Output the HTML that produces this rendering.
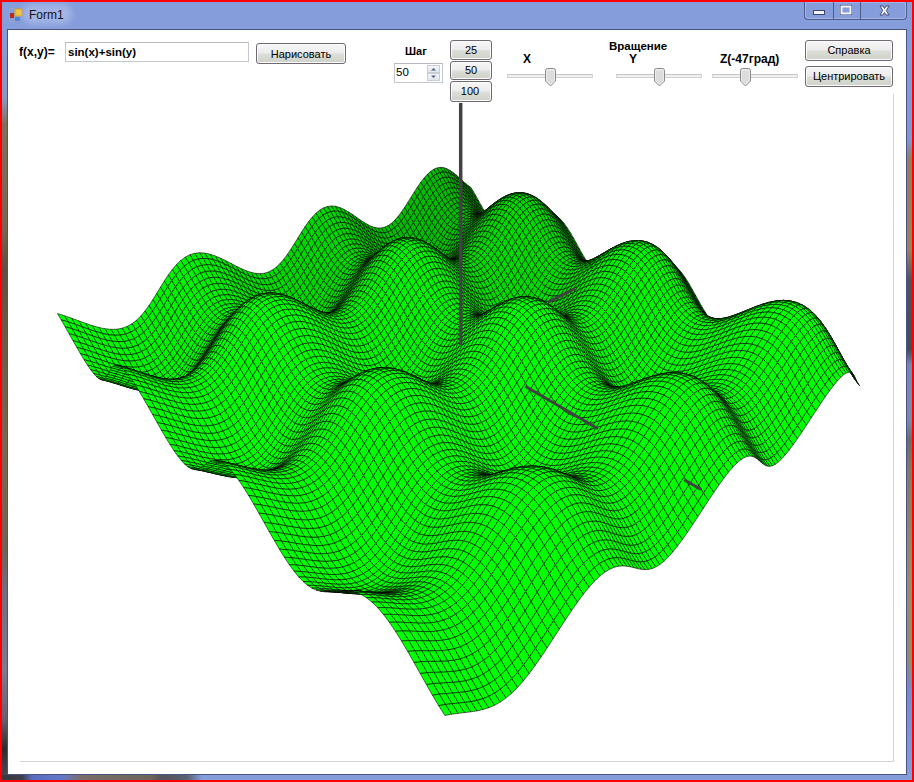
<!DOCTYPE html>
<html><head><meta charset="utf-8">
<style>
*{box-sizing:border-box}
html,body{margin:0;padding:0;width:914px;height:782px;overflow:hidden;background:#ff0000}
body{position:relative;font-family:"Liberation Sans",sans-serif}
.a{position:absolute}
#frame{left:2px;top:2px;width:910px;height:778px;background:#869ddb}
#client{left:8px;top:30px;width:898px;height:744px;background:#fff}
.t{position:absolute;white-space:pre;color:#000;line-height:12px}
.b{font-weight:bold;font-size:11px}
.n{font-size:11px}
.btn{position:absolute;border:1px solid #6f6872;border-radius:3px;background:linear-gradient(#f6f6f6 0%,#ececec 48%,#dcded8 52%,#ced1ca 100%);box-shadow:inset 0 0 0 1px #fcfcfc;font-size:11px;text-align:center;color:#000}
.track{position:absolute;height:4px;border:1px solid #d2d2d2;border-top-color:#c4c4c4;background:#f0f0f0;border-radius:1px}
.thumb{position:absolute;width:11px;height:19px}
</style></head><body>
<div id="frame" class="a"></div>
<div class="a" style="left:2px;top:29px;width:5px;height:751px;background:linear-gradient(180deg,#869ddb 0px,#8a96c0 70px,#80705a 95px,#786650 200px,#5e5040 240px,#6a5a45 300px,#7a6850 420px,#706456 520px,#746c80 560px,#807890 640px,#6a6070 690px,#2e2a30 720px,#4a4452 745px,#3c3a44 751px)"></div>
<div class="a" style="left:907px;top:20px;width:5px;height:760px;background:linear-gradient(180deg,#869ddb 0px,#8496d0 120px,#9a7a58 140px,#a08058 230px,#585058 260px,#4c4a52 330px,#7a86b0 345px,#8088a8 400px,#706a66 420px,#8a7660 450px,#a08a64 560px,#9c8866 640px,#7a88c8 670px,#869ddb 760px)"></div>
<div class="a" style="left:2px;top:775px;width:910px;height:5px;background:linear-gradient(90deg,#3a3840 0px,#3e3e4a 20px,#5a6cc0 30px,#6478c8 60px,#7a6e66 80px,#6e6458 150px,#54525a 160px,#5c6070 185px,#869ddb 200px,#869ddb 910px)"></div>
<!-- title -->
<svg class="a" style="left:9px;top:8px" width="14" height="14" viewBox="0 0 14 14">
<rect x="0.5" y="0.5" width="5" height="5" fill="none" stroke="#c8b8a0" stroke-width="0.6" stroke-dasharray="1 1"/>
<rect x="0.5" y="8.5" width="5" height="5" fill="none" stroke="#c8b8a0" stroke-width="0.6" stroke-dasharray="1 1"/>
<rect x="1" y="5" width="4" height="5" fill="#b52a1c"/>
<rect x="6" y="1" width="7" height="7" fill="#f2c33a" stroke="#d59a1a" stroke-width="0.8"/>
<rect x="6" y="9" width="5" height="4" fill="#4a86d8"/>
</svg>
<div class="a" style="left:22px;top:4px;width:50px;height:20px;border-radius:10px;background:rgba(200,210,245,.45);filter:blur(3px)"></div>
<div class="t" style="left:29px;top:9px;font-size:12px;line-height:12px;color:#111">Form1</div>
<!-- control box -->
<div class="a" style="left:804px;top:2px;width:103px;height:18px;border:1px solid #4e5a8a;border-top:none;border-radius:0 0 4px 4px;box-shadow:inset 0 0 0 1px rgba(255,255,255,.25)"></div>
<div class="a" style="left:833px;top:2px;width:1px;height:17px;background:#4e5a8a"></div>
<div class="a" style="left:860px;top:2px;width:1px;height:17px;background:#4e5a8a"></div>
<svg class="a" style="left:804px;top:2px" width="103" height="18">
<rect x="9.5" y="8.5" width="11" height="4" fill="#f4f4f4" stroke="#3c4470" stroke-width="1"/>
<rect x="36.5" y="3.5" width="11" height="9" fill="none" stroke="#3c4470" stroke-width="1"/>
<rect x="37.5" y="4.5" width="9" height="7" fill="none" stroke="#f4f4f4" stroke-width="2"/>
<path d="M76 4 L79 4 L80.5 6.5 L82 4 L85 4 L82.3 8.5 L85 13 L82 13 L80.5 10.5 L79 13 L76 13 L78.7 8.5 Z" fill="#f4f4f4" stroke="#3c4470" stroke-width="0.9"/>
</svg>
<div id="client" class="a" style="border:1px solid rgba(20,25,60,.55);background-clip:padding-box;left:7px;top:29px;width:900px;height:746px"></div>

<!-- controls -->
<div class="t b" style="left:19px;top:46px;font-size:12px">f(x,y)=</div>
<div class="a" style="left:65px;top:42px;width:184px;height:20px;border:1px solid #c3c7cf;border-top-color:#b5b9c2;background:#fff"></div>
<div class="t b" style="left:68px;top:46px;font-size:11.5px">sin(x)+sin(y)</div>
<div class="btn" style="left:256px;top:43px;width:90px;height:21px;line-height:20px;padding-left:0">Нарисовать</div>

<div class="t b" style="left:405px;top:45px">Шаг</div>
<div class="a" style="left:394px;top:63px;width:49px;height:20px;border:1px solid #c3c7cf;border-top-color:#b5b9c2;background:#fff"></div>
<div class="t n" style="left:396px;top:66px;font-size:11.5px">50</div>
<div class="a" style="left:427px;top:65px;width:13px;height:8px;border:1px solid #c9ced6;background:linear-gradient(#f4f6f9,#e1e5eb)"></div>
<div class="a" style="left:427px;top:73px;width:13px;height:8px;border:1px solid #c9ced6;background:linear-gradient(#f4f6f9,#e1e5eb)"></div>
<svg class="a" style="left:427px;top:65px" width="13" height="16"><path d="M4 5.5 L6.5 3 L9 5.5Z" fill="#4d6185"/><path d="M4 10.5 L6.5 13 L9 10.5Z" fill="#4d6185"/></svg>

<div class="btn" style="left:450px;top:40px;width:42px;height:20px;line-height:18px">25</div>
<div class="btn" style="left:450px;top:61px;width:42px;height:19px;line-height:17px">50</div>
<div class="btn" style="left:450px;top:81px;width:42px;height:21px;line-height:19px;text-indent:-2px">100</div>

<div class="t b" style="left:523px;top:53px;font-size:12px">X</div>
<div class="track" style="left:507px;top:74px;width:86px"></div>
<svg class="thumb" style="left:545px;top:68px" viewBox="0 0 11 19"><path d="M0.5 2.5 Q0.5 0.5 2.5 0.5 L8.5 0.5 Q10.5 0.5 10.5 2.5 L10.5 13 L5.5 18 L0.5 13 Z" fill="#ececec" stroke="#8a8a8a"/><path d="M2 2.5 L9 2.5 L9 12.5 L5.5 16 L2 12.5Z" fill="#dcdcdc"/></svg>

<div class="t b" style="left:609px;top:40px;font-size:11.5px">Вращение</div>
<div class="t b" style="left:629px;top:53px;font-size:12px">Y</div>
<div class="track" style="left:616px;top:74px;width:86px"></div>
<svg class="thumb" style="left:654px;top:68px" viewBox="0 0 11 19"><path d="M0.5 2.5 Q0.5 0.5 2.5 0.5 L8.5 0.5 Q10.5 0.5 10.5 2.5 L10.5 13 L5.5 18 L0.5 13 Z" fill="#ececec" stroke="#8a8a8a"/><path d="M2 2.5 L9 2.5 L9 12.5 L5.5 16 L2 12.5Z" fill="#dcdcdc"/></svg>

<div class="t b" style="left:720px;top:53px;font-size:12px">Z(-47град)</div>
<div class="track" style="left:712px;top:74px;width:86px"></div>
<svg class="thumb" style="left:740px;top:68px" viewBox="0 0 11 19"><path d="M0.5 2.5 Q0.5 0.5 2.5 0.5 L8.5 0.5 Q10.5 0.5 10.5 2.5 L10.5 13 L5.5 18 L0.5 13 Z" fill="#ececec" stroke="#8a8a8a"/><path d="M2 2.5 L9 2.5 L9 12.5 L5.5 16 L2 12.5Z" fill="#dcdcdc"/></svg>

<div class="btn" style="left:805px;top:40px;width:88px;height:21px;line-height:19px">Справка</div>
<div class="btn" style="left:805px;top:66px;width:88px;height:21px;line-height:19px">Центрировать</div>

<!-- picture box borders -->
<div class="a" style="left:893px;top:94px;width:1px;height:668px;background:#d0d5d0"></div>
<div class="a" style="left:20px;top:761px;width:874px;height:1px;background:#d0d5d0"></div>

<svg id="fb" class="a" style="left:0;top:0" width="914" height="782"><defs><linearGradient id="gg" gradientUnits="userSpaceOnUse" x1="0" y1="168" x2="0" y2="715"><stop offset="0" stop-color="#00b400"/><stop offset="0.2" stop-color="#00d200"/><stop offset="0.35" stop-color="#00f000"/><stop offset="0.45" stop-color="#00ff00"/><stop offset="1" stop-color="#00ff00"/></linearGradient></defs><polygon points="57.5,313.3 58.5,313.7 59.5,314 60.5,314.3 61.5,314.7 62.5,315 63.5,315.3 64.5,315.7 65.5,316 66.5,316.3 67.5,316.7 68.5,317 69.5,317.3 70.5,317.7 71.5,318 72.5,318.3 73.5,319 74.5,319.3 75.5,319.7 76.5,320 77.5,320.3 78.5,320.7 79.5,321 80.5,321.3 81.5,321.7 82.5,322 83.5,322.3 84.5,322.7 85.5,323 86.5,323.3 87.5,323.7 88.5,324 89.5,324.7 90.5,325 91.5,325.3 92.5,325.7 93.5,326 94.5,326 95.5,326.3 96.5,326.7 97.5,327 98.5,327.3 99.5,327.7 100.5,328 101.5,328 102.5,328.3 103.5,328.7 104.5,328.7 105.5,329 106.5,329 107.5,329 108.5,329.3 109.5,329.3 110.5,329.3 111.5,329.3 112.5,329.3 113.5,329.3 114.5,329.3 115.5,329.3 116.5,329 117.5,329 118.5,328.7 119.5,328.7 120.5,328.3 121.5,328.3 122.5,328 123.5,327.7 124.5,327.3 125.5,327 126.5,326.7 127.5,326.3 128.5,325.7 129.5,325 130.5,324.7 131.5,324 132.5,323.3 133.5,322.3 134.5,321.7 135.5,320.7 136.5,320 137.5,319 138.5,318 139.5,317 140.5,316 141.5,315 142.5,313.7 143.5,312.7 144.5,311.3 145.5,310.3 146.5,309 147.5,307.7 148.5,306.3 149.5,304.7 150.5,303 151.5,301.3 152.5,299.7 153.5,298.3 154.5,296.7 155.5,295 156.5,293.3 157.5,291.7 158.5,290 159.5,288.3 160.5,286.7 161.5,285 162.5,283.7 163.5,282 164.5,280.7 165.5,279 166.5,277.7 167.5,276 168.5,274.7 169.5,273.3 170.5,272 171.5,270.7 172.5,269.3 173.5,268 174.5,266.7 175.5,265.7 176.5,264.3 177.5,263.3 178.5,262.7 179.5,261.7 180.5,260.7 181.5,260 182.5,259 183.5,258.3 184.5,257.7 185.5,257 186.5,256.3 187.5,256 188.5,255.3 189.5,255 190.5,254.7 191.5,254.3 192.5,254 193.5,253.7 194.5,253.3 195.5,253 196.5,253 197.5,253 198.5,253 199.5,252.7 200.5,253 201.5,253 202.5,253 203.5,253 204.5,253 205.5,253.3 206.5,253.3 207.5,253.7 208.5,254 209.5,254 210.5,254.3 211.5,254.7 212.5,255 213.5,255.3 214.5,255.7 215.5,256 216.5,256.3 217.5,256.7 218.5,257.3 219.5,257.7 220.5,258 221.5,258.7 222.5,259 223.5,259.3 224.5,260 225.5,260.3 226.5,261 227.5,261.7 228.5,262 229.5,262.7 230.5,263.3 231.5,263.7 232.5,264.3 233.5,264.7 234.5,265.3 235.5,265.7 236.5,266.3 237.5,266.7 238.5,267.3 239.5,267.7 240.5,268 241.5,268.7 242.5,269 243.5,269.7 244.5,270 245.5,270.3 246.5,271 247.5,271.3 248.5,271.3 249.5,271.7 250.5,272 251.5,272.3 252.5,272.7 253.5,273 254.5,273.3 255.5,273.3 256.5,273.7 257.5,273.7 258.5,273.7 259.5,273.7 260.5,273.7 261.5,273.7 262.5,273.3 263.5,273.3 264.5,273 265.5,272.7 266.5,272.3 267.5,272 268.5,271.7 269.5,271.3 270.5,270.7 271.5,270.3 272.5,269.7 273.5,269 274.5,268.3 275.5,267.3 276.5,266.7 277.5,265.7 278.5,265 279.5,264 280.5,263 281.5,261.7 282.5,260.7 283.5,259.3 284.5,258 285.5,256.7 286.5,255.3 287.5,254 288.5,252.3 289.5,251 290.5,249.7 291.5,248 292.5,246.3 293.5,245 294.5,243.3 295.5,241.7 296.5,240 297.5,238.7 298.5,237 299.5,235.3 300.5,233.7 301.5,232 302.5,230.3 303.5,228.7 304.5,227.3 305.5,225.7 306.5,224.3 307.5,222.7 308.5,221.3 309.5,220 310.5,219 311.5,217.7 312.5,216.7 313.5,215.7 314.5,214.3 315.5,213.3 316.5,212.7 317.5,211.7 318.5,211 319.5,210.3 320.5,209.7 321.5,209 322.5,208.3 323.5,207.7 324.5,207.3 325.5,207 326.5,206.7 327.5,206.3 328.5,206.3 329.5,206 330.5,206 331.5,205.7 332.5,206 333.5,206 334.5,206 335.5,206 336.5,206.3 337.5,206.7 338.5,207 339.5,207 340.5,207.7 341.5,208 342.5,208.7 343.5,209 344.5,209.7 345.5,210 346.5,210.7 347.5,211 348.5,211.7 349.5,212.3 350.5,213 351.5,213.7 352.5,214.3 353.5,215.3 354.5,216 355.5,216.7 356.5,217.3 357.5,218 358.5,218.7 359.5,219.3 360.5,220 361.5,220.7 362.5,221.3 363.5,222 364.5,222.7 365.5,223.3 366.5,224 367.5,224.3 368.5,225 369.5,225.3 370.5,225.7 371.5,226 372.5,226.7 373.5,227 374.5,227.3 375.5,227.3 376.5,227.7 377.5,227.7 378.5,227.7 379.5,227.7 380.5,227.7 381.5,227.7 382.5,227.7 383.5,227.3 384.5,227.3 385.5,226.7 386.5,226.3 387.5,225.7 388.5,225 389.5,224.3 390.5,223.7 391.5,223 392.5,222 393.5,221.3 394.5,220.3 395.5,219.3 396.5,218 397.5,217 398.5,216 399.5,214.7 400.5,213.3 401.5,212 402.5,210.3 403.5,208.7 404.5,207.3 405.5,205.7 406.5,204 407.5,202.3 408.5,201 409.5,199.3 410.5,198 411.5,196.3 412.5,194.7 413.5,192.7 414.5,191 415.5,189.7 416.5,188 417.5,186.7 418.5,185.3 419.5,183.7 420.5,182.3 421.5,181.3 422.5,180 423.5,178.7 424.5,177.7 425.5,176.3 426.5,175 427.5,174 428.5,173 429.5,172.3 430.5,171.3 431.5,170.7 432.5,170 433.5,169.3 434.5,168.7 435.5,168.3 436.5,168 437.5,167.7 438.5,167.7 439.5,167.7 440.5,167.3 441.5,167.3 442.5,167.3 443.5,167.3 444.5,167.7 445.5,168 446.5,168.3 447.5,169 448.5,169.3 449.5,170 450.5,170.7 451.5,171.3 452.5,172 453.5,172.7 454.5,173.7 455.5,174.3 456.5,175.3 457.5,176.3 458.5,177 459.5,178 460.5,179 461.5,179.7 462.5,180.7 463.5,181.7 464.5,182.3 465.5,183.3 466.5,184 467.5,184.7 468.5,185.7 469.5,186.3 470.5,187 471.5,188 472.5,189.7 473.5,191.7 474.5,193.3 475.5,195 476.5,196.7 477.5,198.3 478.5,200 479.5,201.7 480.5,203.7 481.5,205.7 482.5,207.3 483.5,209 484.5,211 485.5,210 486.5,209.3 487.5,208.7 488.5,207.7 489.5,207 490.5,206 491.5,205.3 492.5,204.3 493.5,203.7 494.5,203 495.5,202 496.5,201.3 497.5,200.7 498.5,200 499.5,199.3 500.5,198.7 501.5,198 502.5,197.7 503.5,197 504.5,196.7 505.5,196 506.5,195.7 507.5,195.3 508.5,194.7 509.5,194.3 510.5,194 511.5,193.7 512.5,193.3 513.5,193.3 514.5,193 515.5,192.7 516.5,192.7 517.5,192.7 518.5,192.3 519.5,192.3 520.5,192.3 521.5,192.7 522.5,192.7 523.5,192.7 524.5,193 525.5,193 526.5,193.3 527.5,193.7 528.5,194 529.5,194 530.5,194.7 531.5,195.3 532.5,195.7 533.5,196.3 534.5,196.7 535.5,197 536.5,197.7 537.5,198.3 538.5,199 539.5,200 540.5,200.7 541.5,201.3 542.5,202.3 543.5,203 544.5,204 545.5,205 546.5,206 547.5,207 548.5,208 549.5,209 550.5,210 551.5,211 552.5,212 553.5,213 554.5,214 555.5,215 556.5,215.7 557.5,216.7 558.5,217.3 559.5,218.3 560.5,219 561.5,220 562.5,221.3 563.5,222.3 564.5,223.7 565.5,225 566.5,226.3 567.5,227.7 568.5,229.3 569.5,231 570.5,232.3 571.5,234 572.5,236 573.5,237.7 574.5,239.3 575.5,241.3 576.5,243.3 577.5,245 578.5,247 579.5,248.7 580.5,250.3 581.5,252.3 582.5,254 583.5,255.7 584.5,257.3 585.5,259 586.5,260.7 587.5,260.7 588.5,260.7 589.5,260.3 590.5,260 591.5,259.3 592.5,259 593.5,258.7 594.5,258 595.5,257.7 596.5,257 597.5,256.3 598.5,256 599.5,255.3 600.5,255 601.5,254.3 602.5,253.7 603.5,253 604.5,252.3 605.5,251.7 606.5,251 607.5,250.3 608.5,250 609.5,249.3 610.5,249 611.5,248.3 612.5,248 613.5,247.3 614.5,246.7 615.5,246 616.5,245.7 617.5,245.3 618.5,244.7 619.5,244.3 620.5,243.7 621.5,243.7 622.5,243.3 623.5,243 624.5,242.7 625.5,242.3 626.5,242 627.5,242 628.5,241.3 629.5,241.3 630.5,241 631.5,241 632.5,240.3 633.5,240.3 634.5,240.3 635.5,240.3 636.5,240.3 637.5,240.3 638.5,240.3 639.5,240.3 640.5,240.3 641.5,240.3 642.5,241 643.5,241 644.5,241.3 645.5,241.3 646.5,241.7 647.5,242 648.5,242.3 649.5,243 650.5,243.3 651.5,243.7 652.5,244.3 653.5,245 654.5,245.7 655.5,246.3 656.5,247 657.5,247.7 658.5,248.3 659.5,249 660.5,249.7 661.5,250.3 662.5,251.3 663.5,252.3 664.5,253.3 665.5,254.3 666.5,255.7 667.5,256.7 668.5,257.7 669.5,258.7 670.5,260 671.5,261 672.5,262.3 673.5,263.7 674.5,264.7 675.5,266 676.5,267 677.5,268 678.5,269 679.5,270 680.5,271.3 681.5,272.7 682.5,273.7 683.5,275 684.5,276.3 685.5,277.7 686.5,279.3 687.5,281 688.5,282.7 689.5,284.3 690.5,286 691.5,288 692.5,289.7 693.5,291.3 694.5,293 695.5,295 696.5,296.7 697.5,298.7 698.5,300.7 699.5,302.3 700.5,304 701.5,305.7 702.5,307 703.5,308.7 704.5,310.3 705.5,312 706.5,313.7 707.5,315.3 708.5,316.3 709.5,316.7 710.5,317.3 711.5,317.7 712.5,318 713.5,318 714.5,318.3 715.5,318.7 716.5,318.7 717.5,318.7 718.5,318.7 719.5,318.7 720.5,318.3 721.5,318.3 722.5,318.3 723.5,318 724.5,318 725.5,317.7 726.5,317.3 727.5,317.3 728.5,317 729.5,316.7 730.5,316.3 731.5,316 732.5,315.7 733.5,315.3 734.5,315 735.5,314.7 736.5,314.3 737.5,314 738.5,313.7 739.5,313 740.5,312.7 741.5,312.3 742.5,311.7 743.5,311.3 744.5,311 745.5,310.7 746.5,310.3 747.5,310 748.5,309.3 749.5,309 750.5,308.7 751.5,308.3 752.5,308 753.5,307.3 754.5,307 755.5,306.3 756.5,306.3 757.5,306 758.5,305.7 759.5,305 760.5,304.7 761.5,304.3 762.5,304 763.5,304 764.5,303.7 765.5,303.3 766.5,303 767.5,302.7 768.5,302.3 769.5,302.3 770.5,301.7 771.5,301.7 772.5,301.7 773.5,301.3 774.5,301 775.5,301 776.5,300.7 777.5,300.7 778.5,300.7 779.5,300.7 780.5,300.7 781.5,300.3 782.5,300.3 783.5,300 784.5,300 785.5,300.3 786.5,300.3 787.5,300.7 788.5,300.7 789.5,300.7 790.5,300.7 791.5,301 792.5,301.3 793.5,301.7 794.5,302 795.5,302 796.5,302.3 797.5,302.7 798.5,303.3 799.5,303.7 800.5,304 801.5,304.7 802.5,305 803.5,305.7 804.5,306.3 805.5,307 806.5,307.7 807.5,308.3 808.5,309 809.5,309.7 810.5,310.3 811.5,311.3 812.5,312.3 813.5,313 814.5,314 815.5,315 816.5,316.3 817.5,317.3 818.5,318.7 819.5,319.7 820.5,321 821.5,322.3 822.5,323.7 823.5,325 824.5,326.3 825.5,327.7 826.5,329.3 827.5,331 828.5,332.7 829.5,334.3 830.5,336 831.5,337.7 832.5,339.3 833.5,341 834.5,343 835.5,344.7 836.5,346.3 837.5,348 838.5,350 839.5,351.7 840.5,353.7 841.5,355.3 842.5,357.3 843.5,359 844.5,360.7 845.5,362.7 846.5,364.3 847.5,365.7 848.5,367.3 849.5,368.7 850.5,370 851.5,371.7 852.5,373 853.5,374.3 854.5,376.3 855.5,378.3 856.5,380.3 857.5,382.3 858.5,384 859.5,385.3 859.5,386 858.5,384.7 857.5,383.3 856.5,381.7 855.5,380.3 854.5,379 853.5,377.7 852.5,376 851.5,374.3 850.5,372.7 849.5,372.3 848.5,372.3 847.5,372.7 846.5,373 845.5,373.7 844.5,374.3 843.5,375 842.5,376 841.5,376.7 840.5,377.7 839.5,378.7 838.5,380 837.5,381 836.5,382 835.5,383.3 834.5,384.7 833.5,385.7 832.5,387 831.5,388.3 830.5,389.7 829.5,391 828.5,392.7 827.5,394 826.5,395.3 825.5,397 824.5,398.3 823.5,399.7 822.5,401.3 821.5,402.7 820.5,404 819.5,405.7 818.5,407 817.5,408.7 816.5,410.3 815.5,411.7 814.5,413.3 813.5,414.7 812.5,416 811.5,417.7 810.5,419 809.5,420.7 808.5,422 807.5,423.7 806.5,425 805.5,426.7 804.5,428 803.5,429.7 802.5,431 801.5,432.7 800.5,434 799.5,435.7 798.5,437.3 797.5,438.7 796.5,440.3 795.5,441.7 794.5,443 793.5,444.7 792.5,446 791.5,447.3 790.5,448.7 789.5,450 788.5,451.3 787.5,452.3 786.5,453.7 785.5,455 784.5,456 783.5,457 782.5,458 781.5,459 780.5,460 779.5,461 778.5,462 777.5,462.7 776.5,463.3 775.5,464 774.5,464.7 773.5,465.3 772.5,466 771.5,466 770.5,466 769.5,466.3 768.5,466.3 767.5,466.3 766.5,466 765.5,465.7 764.5,465 763.5,464.3 762.5,463.7 761.5,462.7 760.5,461.7 759.5,461 758.5,460 757.5,459.3 756.5,458.7 755.5,458 754.5,457.3 753.5,457 752.5,456.3 751.5,456.3 750.5,456.3 749.5,456.3 748.5,456.3 747.5,456.7 746.5,457 745.5,457.3 744.5,457.7 743.5,458 742.5,458.7 741.5,459.3 740.5,460 739.5,461 738.5,461.7 737.5,462.7 736.5,463.7 735.5,464.7 734.5,465.3 733.5,466.3 732.5,467.3 731.5,468.7 730.5,470 729.5,471 728.5,472.3 727.5,473.7 726.5,475 725.5,476.3 724.5,477.7 723.5,479 722.5,480.3 721.5,481.7 720.5,483 719.5,484.3 718.5,486 717.5,487.3 716.5,488.7 715.5,490.3 714.5,491.7 713.5,493.3 712.5,494.7 711.5,496 710.5,497.7 709.5,499 708.5,500.3 707.5,502 706.5,503.7 705.5,505 704.5,506.7 703.5,508.3 702.5,509.7 701.5,511.3 700.5,512.7 699.5,514.3 698.5,515.7 697.5,517.3 696.5,519 695.5,520.3 694.5,522 693.5,523.7 692.5,525.3 691.5,526.7 690.5,528 689.5,529.7 688.5,531 687.5,532.3 686.5,534 685.5,535.3 684.5,536.7 683.5,538.3 682.5,539.7 681.5,541 680.5,542.3 679.5,543.7 678.5,545 677.5,546.3 676.5,547.7 675.5,548.7 674.5,550 673.5,551.3 672.5,552.3 671.5,553.7 670.5,554.7 669.5,555.7 668.5,557 667.5,558 666.5,559 665.5,559.7 664.5,560.7 663.5,561.7 662.5,562.3 661.5,563.3 660.5,564 659.5,564.7 658.5,565.3 657.5,566 656.5,566.7 655.5,567 654.5,567.7 653.5,568 652.5,568.3 651.5,568.7 650.5,569 649.5,569.3 648.5,569.7 647.5,569.7 646.5,569.7 645.5,569.7 644.5,569.3 643.5,569.3 642.5,569.3 641.5,569.3 640.5,569 639.5,569 638.5,568.7 637.5,568.3 636.5,568.3 635.5,568 634.5,568 633.5,567.7 632.5,567.3 631.5,567 630.5,567 629.5,566.7 628.5,566.3 627.5,566.3 626.5,566 625.5,566 624.5,566 623.5,566 622.5,566 621.5,566 620.5,566 619.5,566 618.5,566.3 617.5,566.7 616.5,566.7 615.5,567 614.5,567.3 613.5,567.7 612.5,568 611.5,568.7 610.5,569 609.5,569.3 608.5,570 607.5,570.7 606.5,571.3 605.5,572 604.5,572.7 603.5,573.3 602.5,574 601.5,575 600.5,575.7 599.5,576.7 598.5,577.7 597.5,578.7 596.5,579.3 595.5,580.3 594.5,581.3 593.5,582.3 592.5,583.7 591.5,584.7 590.5,586 589.5,587 588.5,588 587.5,589.3 586.5,590.3 585.5,591.7 584.5,592.7 583.5,594 582.5,595.3 581.5,596.7 580.5,598 579.5,599.7 578.5,601 577.5,602.3 576.5,604 575.5,605.3 574.5,606.7 573.5,608.3 572.5,609.7 571.5,611 570.5,612.7 569.5,614 568.5,615.7 567.5,617 566.5,618.7 565.5,620 564.5,621.7 563.5,623 562.5,624.3 561.5,626 560.5,627.3 559.5,629 558.5,630.3 557.5,632 556.5,633.7 555.5,635 554.5,636.7 553.5,638.3 552.5,639.7 551.5,641.3 550.5,643 549.5,644.3 548.5,646 547.5,647.7 546.5,649 545.5,650.7 544.5,652 543.5,653.7 542.5,655 541.5,656.7 540.5,658 539.5,659.3 538.5,661 537.5,662.3 536.5,663.7 535.5,665.3 534.5,666.7 533.5,668 532.5,669.3 531.5,670.7 530.5,672 529.5,673.3 528.5,674.7 527.5,675.7 526.5,677 525.5,678.3 524.5,679.3 523.5,680.7 522.5,681.7 521.5,683 520.5,684 519.5,685.3 518.5,686.7 517.5,687.7 516.5,688.7 515.5,689.7 514.5,690.7 513.5,691.7 512.5,692.7 511.5,693.7 510.5,694.3 509.5,695.3 508.5,696 507.5,697 506.5,697.7 505.5,698.7 504.5,699.3 503.5,700 502.5,700.7 501.5,701.3 500.5,702 499.5,702.7 498.5,703 497.5,703.7 496.5,704.3 495.5,704.7 494.5,705.3 493.5,705.7 492.5,706 491.5,706.7 490.5,707 489.5,707.3 488.5,708 487.5,708.3 486.5,708.3 485.5,708.7 484.5,709 483.5,709.3 482.5,709.7 481.5,709.7 480.5,710 479.5,710.3 478.5,710.3 477.5,710.7 476.5,711 475.5,711 474.5,711.3 473.5,711.3 472.5,711.7 471.5,711.7 470.5,712 469.5,712 468.5,712 467.5,712.3 466.5,712.3 465.5,712.3 464.5,712.7 463.5,712.7 462.5,712.7 461.5,712.7 460.5,713 459.5,713 458.5,713 457.5,713.3 456.5,713.3 455.5,713.7 454.5,713.7 453.5,714 452.5,714 451.5,714.3 450.5,714.3 449.5,714.7 448.5,714.7 447.5,715 446.5,715.3 445.5,715.3 444.5,715.3 443.5,713.7 442.5,712 441.5,710.3 440.5,709 439.5,707.3 438.5,705.7 437.5,704 436.5,702.3 435.5,700.7 434.5,699 433.5,697.3 432.5,695.3 431.5,693.7 430.5,692 429.5,690.3 428.5,688.7 427.5,687 426.5,685.3 425.5,683.7 424.5,681.7 423.5,679.7 422.5,678 421.5,676 420.5,674 419.5,672.3 418.5,670.7 417.5,668.7 416.5,667 415.5,665.3 414.5,663.7 413.5,662 412.5,660 411.5,658.3 410.5,656.7 409.5,654.7 408.5,653 407.5,651.3 406.5,649.7 405.5,648 404.5,646 403.5,644.3 402.5,642.7 401.5,641 400.5,639.3 399.5,638 398.5,636.3 397.5,634.7 396.5,633 395.5,631.3 394.5,630 393.5,628.3 392.5,627 391.5,625.3 390.5,624 389.5,622.3 388.5,621 387.5,619.7 386.5,618.7 385.5,617.3 384.5,616 383.5,614.7 382.5,613.7 381.5,612.3 380.5,611.3 379.5,610 378.5,609 377.5,607.7 376.5,606.7 375.5,605.7 374.5,604.7 373.5,603.7 372.5,602.7 371.5,601.7 370.5,601 369.5,600 368.5,599.3 367.5,598.3 366.5,597.7 365.5,597 364.5,596.3 363.5,596 362.5,595.3 361.5,594.7 360.5,594.3 359.5,594.3 358.5,594.3 357.5,594.3 356.5,594 355.5,594 354.5,593.7 353.5,593.7 352.5,593.7 351.5,593.7 350.5,593.7 349.5,593.7 348.5,593.7 347.5,593.3 346.5,593.3 345.5,593.3 344.5,593.3 343.5,593 342.5,593 341.5,592.7 340.5,592.7 339.5,592.7 338.5,592.7 337.5,592.7 336.5,592.3 335.5,592.3 334.5,592 333.5,592 332.5,592 331.5,592 330.5,592 329.5,591.7 328.5,591.7 327.5,591.7 326.5,591.7 325.5,591.7 324.5,591.7 323.5,591.3 322.5,591.3 321.5,591.3 320.5,591.3 319.5,591 318.5,590.7 317.5,590.7 316.5,590.3 315.5,590 314.5,589.7 313.5,589 312.5,588.7 311.5,588 310.5,587.3 309.5,586.7 308.5,586 307.5,585.3 306.5,584.3 305.5,583.7 304.5,582.7 303.5,582 302.5,581 301.5,580 300.5,579 299.5,578 298.5,577 297.5,575.7 296.5,574.7 295.5,573.3 294.5,572.3 293.5,571 292.5,569.3 291.5,568 290.5,566.7 289.5,565.3 288.5,563.7 287.5,562 286.5,560.7 285.5,559 284.5,557.3 283.5,555.7 282.5,554.3 281.5,552.7 280.5,551 279.5,549.3 278.5,547.7 277.5,546.3 276.5,544.7 275.5,543 274.5,541.3 273.5,539.7 272.5,537.7 271.5,536 270.5,534.3 269.5,532.3 268.5,530.7 267.5,529 266.5,527 265.5,525.3 264.5,523.7 263.5,522 262.5,520 261.5,518 260.5,516.3 259.5,514.3 258.5,512.7 257.5,511 256.5,509.3 255.5,507.3 254.5,505.7 253.5,504 252.5,502.3 251.5,500.7 250.5,499 249.5,497.3 248.5,495.7 247.5,494 246.5,492.7 245.5,491 244.5,489.3 243.5,487.7 242.5,486.3 241.5,484.7 240.5,483.3 239.5,481.7 238.5,480.3 237.5,478.7 236.5,477.7 235.5,477.7 234.5,477.7 233.5,477.3 232.5,477.3 231.5,477 230.5,477 229.5,476.7 228.5,476.7 227.5,476.7 226.5,476.3 225.5,476 224.5,475.7 223.5,475.7 222.5,475.3 221.5,475.3 220.5,475.3 219.5,474.7 218.5,474.7 217.5,474.3 216.5,474 215.5,473.7 214.5,473.7 213.5,473.7 212.5,473 211.5,473 210.5,472.7 209.5,472.3 208.5,472 207.5,472 206.5,472 205.5,471.3 204.5,471.3 203.5,471 202.5,471 201.5,470.7 200.5,470.7 199.5,470.3 198.5,470 197.5,470 196.5,469.7 195.5,469.7 194.5,469.3 193.5,469.3 192.5,469 191.5,468.7 190.5,468.7 189.5,468 188.5,467.3 187.5,466.7 186.5,466 185.5,465 184.5,464.3 183.5,463.3 182.5,462 181.5,461 180.5,460 179.5,458.7 178.5,457.3 177.5,456 176.5,454.7 175.5,453 174.5,451.7 173.5,450.3 172.5,448.7 171.5,447 170.5,445.3 169.5,444 168.5,442.3 167.5,440.7 166.5,439 165.5,437.3 164.5,435.7 163.5,433.7 162.5,432 161.5,430.3 160.5,428.7 159.5,427 158.5,425.3 157.5,423.7 156.5,422 155.5,420 154.5,418 153.5,416.3 152.5,414.3 151.5,412.7 150.5,411 149.5,409.7 148.5,408 147.5,406.3 146.5,404.3 145.5,402.7 144.5,401 143.5,399 142.5,397.3 141.5,395.7 140.5,394 139.5,392.3 138.5,390.7 137.5,390 136.5,389.7 135.5,389.7 134.5,389.3 133.5,389 132.5,388.7 131.5,388.3 130.5,388.3 129.5,388 128.5,387.7 127.5,387.3 126.5,387 125.5,387 124.5,386.7 123.5,386.3 122.5,386 121.5,385.7 120.5,385.3 119.5,385 118.5,384.7 117.5,384.3 116.5,384 115.5,383.7 114.5,383.3 113.5,383 112.5,382.7 111.5,382.3 110.5,382 109.5,381.7 108.5,381.7 107.5,381.3 106.5,381 105.5,380.7 104.5,380.3 103.5,380.3 102.5,380 101.5,379.7 100.5,379.7 99.5,379 98.5,378.7 97.5,377.7 96.5,377 95.5,376 94.5,374.7 93.5,373.7 92.5,372.3 91.5,371.3 90.5,370 89.5,368.7 88.5,367 87.5,365.3 86.5,363.7 85.5,362.3 84.5,360.7 83.5,359 82.5,357.3 81.5,355.7 80.5,354 79.5,352.3 78.5,350.3 77.5,348.7 76.5,347 75.5,345.3 74.5,343.7 73.5,342 72.5,340.3 71.5,338.3 70.5,336.7 69.5,335 68.5,333.3 67.5,331.3 66.5,329.7 65.5,328 64.5,326.3 63.5,324.3 62.5,322.7 61.5,320.7 60.5,319 59.5,317.3 58.5,315.7 57.5,313.7" fill="url(#gg)"/><path transform="scale(0.5)" fill="none" stroke="#000" stroke-width="1.6" d="M115 627l7 13 8 13 8 14 8 14 7 13 8 13 7 12 7 11 6 9 6 8 5 6 5 4 4 2 4 0 3-1 3-2 2-3 3-5 2-4 3-4 2-4 3-4 4-2 4 0 4 1 5 4 6 6 7 7 7 10 7 12 9 13 8 14 9 16 9 16 9 15 9 16 8 15 9 14 8 12 7 11 7 9 7 7 6 5 6 4 6 2 5 0 5-2 4-2 5-3 5-3 5-3 5-3 5-2 6 0 6 1 7 3 7 6 8 8 9 10 9 12 9 14 10 16 10 17 10 18 11 18 10 19 11 18 10 17 10 16 9 15 10 13 9 12 9 9 9 8 9 5 8 4 8 2 9 1 8 0 9 0 8-1 9-1 9 0 10 1 10 2 10 5 11 6 11 9 11 11 12 14 12 16 12 17 12 20 12 21 13 22 12 22 13 22 12 21 12 21 13 20M129 631l7 13 8 13 8 14 8 14 7 13 8 13 7 12 7 11 6 9 6 7 5 6 5 4M215 762l4 1 3-1 3-2 2-4 3-4 2-4 3-5 3-4 3-3 3-2M253 735l5 4 6 6 7 7 7 10 7 11 8 14 9 14 9 15 8 16 9 16 9 15 9 15 8 13 8 13 7 10 8 9 6 8 7 5 5 3M401 941l5 0 5-1 5-2 5-3 4-4 5-3 5-2 6-2M447 924l6 1 7 3 7 6 8 7 9 10 9 12 9 14 10 16 10 17 10 18 11 18 10 18 10 18 10 17 10 16 10 15 9 13 9 11 9 10 9 7 9 6 8 3 9 3 8 1 8 0 9-1 9-1 9-1M707 1181l10 1 10 3 10 4 11 6 11 9 11 11 11 14 12 15 12 18 12 19 13 21 12 21 12 22 12 22 13 21 12 21 12 19M143 636l7 13 8 13 8 14 7 13 8 14 8 12 7 12 6 11 7 9 5 8M229 766l3 1 4-1 3-2 3-4 2-4 3-4 2-4 3-4M268 740l5 4 6 5 6 8 7 9 8 12 8 13 9 14 8 15 9 16 9 15 8 16 9 14 8 14 8 12 8 11 7 9 6 7M410 942l5 2 5 0 5-1 5-2 5-3 5-3 5-3 5-3M468 928l7 4 8 5 8 8 8 10 9 11 9 14 10 16 10 17 10 17 10 18 10 19 10 17 10 17 10 16 10 15 9 12 9 11 9 10 9 7 9 6 8 3 9 3 8 1 9 0 8-1 9-1M722 1182l9 1 10 3 10 4 11 6 11 9 11 11 12 13 12 16 12 17 12 19 12 21 12 21 12 21 12 22 12 21 12 20 12 20M157 642l7 12 8 13 8 13 7 14 8 13 7 13 7 12 7 10M242 771l4 0 4-1 3-2 2-3 3-4 3-4M282 745l6 4 5 5 7 8 7 9 8 12 8 12 8 15 9 14 8 16 9 15 9 16 8 14 8 13 8 13 8 10 7 9M424 946l5 1 6 0 5-1 5-2 5-3 4-3 6-3M483 932l7 3 7 6 8 7 9 10 9 12 9 14 10 15 9 17 10 17 11 18 10 18 10 18 9 16 10 16 10 14 9 13 9 11 9 9 9 8 8 5 9 4M683 1185l8 1 9 0 8-1 9 0M736 1184l9 1 10 2 11 5 10 6 11 8 12 11 11 13 12 15 11 18 12 19 12 20 12 21 12 21 12 21 12 21 12 20 12 19M171 647l7 12 8 13 7 13 8 14 7 13 8 13 7 11M256 775l4 0 3-1 3-2 3-3M297 750l5 3 6 6 6 7 7 10 8 11 8 13 8 14 9 15 8 15 9 15 8 15 9 15 8 13 8 12 7 10M443 950l5 1 5-1 6-3 5-2M498 936l7 3 7 5 8 8 8 10 9 11 9 14 10 15 10 17 10 17 10 18 10 17 9 18 10 16 10 16 9 14 10 13 9 11 9 9 8 7 9 5M696 1186l9 1 8 0 9 0M750 1185l9 1 10 3 11 4 10 6 11 8 11 11 12 13 11 15 12 17 12 19 12 20 11 20 12 21 12 21 12 21 12 20 11 19M184 651l8 12 7 13 7 13 8 14 7 13 8 12M269 778l4 1 3-1M306 752l5 2 5 3 6 6 6 7 7 10 8 11 8 13 8 14 8 14 9 15 8 16 9 15 8 14 8 13 8 12 8 10M451 951l5 2 6 0 5-1 5-2M505 937l7 2 7 3 7 5 8 8 9 9 8 12 9 14 10 15 10 16 9 17 10 18 10 17 10 17 10 17 9 15 10 14 9 13 9 11 9 9 8 7 9 5M709 1187l9 1M763 1186l10 1 10 2 10 5 11 6 11 8 11 11 11 12 12 15 11 17 12 19 12 19 11 21 12 20 11 21 12 21 12 19 12 19M197 655l8 12 7 13 7 13 8 13 7 13 7 13M319 756l5 1 5 4 6 5 7 8 7 9 7 11 8 13 8 13 9 15 8 15 9 15 8 15 8 14 8 13 8 12M469 955l6 0M519 940l6 1 7 3 8 6 8 7 8 9 9 12 9 13 9 15 10 16 10 17 10 18 9 17 10 17 10 17 9 15 9 14 10 12 9 11 8 9 9 7 9 5M776 1186l10 1 10 2 10 4 11 7 11 8 11 10 11 13 12 15 11 16 12 18 11 20 12 20 11 21 12 20 11 20 12 20 12 18M210 657l7 12 7 13 8 13 7 13 8 13 7 13M332 758l5 2 6 3 5 5 7 8 7 9 7 11 8 13 8 13 9 15 8 15 8 15 9 14 8 14 8 13 8 12M532 941l7 1 7 3 7 5 8 8 9 9 8 12 9 13 10 15 9 16 10 17 9 17 10 17 10 17 9 16 10 15 9 14 9 12 9 11 9 9 9 7 8 5 9 4M761 1186l9-1 9 0 10 0 10 1 10 2 10 4 11 6 11 8 11 11 11 12 11 15 12 16 11 18 12 19 11 20 11 21 12 20 11 20 12 19 11 19M222 659l7 12 7 12 8 13 7 13 7 13 7 13 7 11M345 759l5 1 5 4 6 5 7 7 6 10 8 11 8 12 8 14 8 14 8 15 9 15 8 14 8 14 8 13 8 12 7 10M538 940l7 0 6 1 8 4 7 5 8 7 8 9 9 12 9 13 9 15 10 16 9 16 10 17 10 18 9 16 10 16 9 15 9 14 9 12 9 11 9 8 9 7 8 6 9 3 9 2 9 1 8 0 9 0 10-1 9-1 10 0 9 1 11 2 10 4 11 6 10 8 11 10 12 13 11 14 11 17 12 18 11 19 11 19 11 21 12 20 11 20 11 19 12 18M233 658l7 12 7 13 8 13 7 13 7 13 8 12 6 11M352 758l5 0 5 1 5 4 6 5 6 7 7 10 8 10 8 13 8 13 8 15 8 14 8 15 9 15 8 13 8 13 7 12 8 10M545 940l6-2 6 0 7 1 7 3 8 6 7 7 9 9 8 11 9 13 10 15 9 16 9 16 10 17 10 17 9 17 9 16 10 15 9 13 9 13 9 10 9 9 9 6 8 6 9 3 9 2 8 1 9 0 9-1 10 0 9-1 10 0 10 1 10 2 10 4 11 6 11 8 11 10 11 12 11 14 11 17 12 17 11 19 11 20 11 20 12 20 11 19 11 19 11 18M244 656l7 12 7 13 8 13 7 13 7 12 7 13 7 11 7 10M359 757l4-2 5 0 5 2 5 3 6 5 7 8 7 9 7 11 8 12 8 13 8 14 8 15 9 15 8 14 8 14 8 13 7 11 8 10 7 9M550 938l6-2 6-2 7 0 7 1 7 3 7 5 8 8 9 9 8 11 9 13 9 14 10 16 9 17 10 17 9 16 10 17 9 16 9 15 9 13 9 12 9 11 9 8 9 7 9 5 8 3 9 2 9 1 9 0 9-1 9 0 10-1 10 0 10 0 10 3 10 3 11 6 11 8 11 10 11 12 11 14 11 17 12 17 11 19 11 19 11 20 11 20 11 20 12 18 11 18M254 653l7 11 7 13 8 13 7 13 7 13 7 12 7 11 7 10 6 9M370 753l4-2 5 0 5 1 5 4 6 5 7 7 7 9 7 11 8 12 8 13 8 15 8 14 8 15 9 14 8 14 7 13 8 11 7 10 7 8 7 7 7 5M556 935l6-3 6-2 6-2 6 0 7 1 7 3 8 5 8 7 8 10 9 11 9 13 9 14 9 16 10 16 9 17 10 17 9 16 9 16 10 15 9 13 9 12 9 10 8 9 9 7 9 5 9 3 9 2 8 1 10 0 9-1 9-1 10-1 10 0 10 0 10 2 10 4 11 6 11 8 11 10 11 12 11 14 11 16 12 17 11 19 11 19 11 20 11 20 11 19 11 19 11 17M264 647l7 12 7 12 7 13 8 13 7 13 7 12 7 11 6 10 6 9 6 7M380 746l4-1 5-1 5 2 6 3 6 5 6 8 7 9 8 10 7 12 8 14 8 14 8 15 9 14 8 14 8 14 8 13 7 11 8 10 7 8 6 7 7 5 6 3 6 2 6 0 6-1 5-3 6-2 6-3 5-3 6-3 7-1 6-1 7 1 8 3 7 5 8 7 9 10 8 11 9 12 9 15 9 15 10 17 9 17 10 16 9 17 9 15 9 15 10 13 9 12 8 10 9 9 9 7 9 5 9 3 9 2 9 0 9 0 9-1 10-1 9-1 10 0 10 0 11 2 10 4 11 6 11 7 11 10 11 12 11 14 11 16 11 17 11 19 12 19 11 20 11 20 11 19 11 18 11 18M273 640l7 12 7 12 7 13 8 13 7 13 7 12 7 11 6 10 6 9 6 7 5 5M386 741l4-2 4-2 5-1 5 2 6 3 6 5 6 7 7 9 8 11 7 12 8 13 8 15 8 14 9 15 8 14 8 14 7 12 8 12 7 10 7 8 7 6 7 5 6 3 6 2 6 0 6-1 5-3 6-2 6-4 6-3 6-2 6-2 7 0 7 1 7 3 8 5 8 7 8 9 9 11 9 12 9 15 9 15 10 17 9 16 9 17 10 16 9 16 9 15 9 13 9 12 9 10 9 8 9 7 9 5 9 3 9 2 9 0 9 0 9-1 10-1 10-1 10-1 10 1 10 1 11 4 11 5 11 8 11 10 11 12 11 14 11 15 11 18 11 18 11 19 11 20 11 20 11 19 11 18 12 18M282 632l7 11 7 13 7 13 7 13 7 12 7 12 7 11 7 10 6 9 6 7 5 5 5 4 5 2M395 732l4-3 5-2 4 0 5 1 6 3 6 5 7 8 7 9 7 10 8 12 8 14 8 14 8 14 8 15 8 14 8 14 8 12 8 11 7 10 7 9 7 6 6 5 7 3 6 1 6 0 6-1 5-2 6-3 6-4 6-3 6-2 7-2 6-1 7 1 8 3 8 5 8 7 8 9 9 11 9 13 9 14 9 15 9 17 10 16 9 17 9 17 9 15 10 15 9 13 9 12 9 10 9 8 9 7 9 4 8 3 9 2 10 1 9-1 9-1 10-1 10-2 10 0 10 0 11 2 11 3 11 6 11 7 11 10 11 11 11 14 11 16 11 17 11 19 11 19 11 20 11 19 11 19 11 19 11 17M290 622l7 11 7 13 7 13 8 13 7 12 7 12 7 11 6 10 6 9 6 7 5 5 6 4 4 2 5 0 4-1 4-2 3-4 4-4M396 729l4-4 4-4 4-3 5-2 4 0 6 1 5 3 6 5 7 7 7 9 7 11 8 12 8 13 8 14 8 15 8 14 8 15 8 13 8 13 8 11 7 10 7 8 7 7 7 4 6 3 6 1 6 0 6-1 6-2 6-3 6-4 6-3 6-3 7-2 7 0 7 1 7 2 8 5 8 7 8 9 9 11 9 13 9 14 9 15 10 16 9 17 9 17 10 16 9 16 9 14 9 14 9 11 9 10 9 9 9 6 9 5 9 3 9 1 9 0 10 0 9-2 10-1 10-1 10-1 11 0 11 2 10 3 11 5 11 7 12 10 11 12 11 13 11 16 11 17 11 19 11 19 11 20 11 19 11 19 11 19 11 17M298 611l7 11 7 13 7 13 8 13 7 12 7 12 7 11 6 10 6 9 6 7 6 5 5 3 4 2 5 1 4-2 4-2 4-3 3-4 4-5 4-4 4-4 4-3 4-2 5 0 5 1 6 3 6 5 7 7 7 9 7 10 8 12 8 14 8 14 8 14 8 15 8 14 8 14 8 12 8 11 7 10 7 8 7 7 7 4 6 3 6 2 6-1 6-1 6-3 6-3 6-3 7-4 6-3 7-2 6 0 8 1 7 2 8 5 8 7 9 9 8 10 9 13 9 14 10 16 9 16 9 17 10 16 9 17 9 15 9 15 9 13 10 12 9 10 9 8 9 6 9 5 9 3 9 1 9 0 10-1 9-1 10-2 11-1 10-1 10 0 11 1 11 3 11 5 11 8 11 9 12 12 11 13 11 16 11 17 11 19 11 19 11 19 11 20 11 19 11 19 11 17M306 599l7 12 7 12 7 13 7 13 8 12 7 12 6 11 7 10 6 9 6 7 5 5 6 3 4 2 5 0 4-1 4-2 4-4 3-4 4-4 4-5 4-4 4-3 5-2 5-1 5 2 6 3 6 5 7 6 7 9 7 11 8 12 8 13 8 14 8 15 8 14 8 15 8 13 8 13 8 11 7 10 7 8 7 6 7 5 6 3 6 1 7-1 6-1 6-3 6-3 6-4 6-3 7-3 6-2 7-1 8 1 7 2 8 5 8 6 9 9 8 11 9 13 10 14 9 15 9 17 9 16 10 17 9 16 9 16 10 14 9 14 9 11 9 10 9 8 9 6 9 5 9 3 10 1 9 0 10-1 9-2 10-2 11-1 10-1 11-1 11 2 11 3 11 5 11 7 11 9 12 12 11 13 11 16 11 17 11 18 11 20 11 19 11 20 11 19 11 18 11 18M314 587l6 11 8 12 7 13 7 13 7 13 7 12 7 11 7 10 6 8 6 7 5 5 5 4 5 2 5 0 4-2 4-2 4-4 4-4 3-4 4-5 4-4 5-3 4-2 5-1 6 1 5 3 7 5 6 7 7 8 8 11 8 12 7 13 9 14 8 15 8 14 8 15 8 13 8 13 7 11 8 10 7 8 7 6 7 5 6 2 7 1 6 0 6-2 6-3 6-3 6-4 7-3 6-3 7-3 7-1 7 1 8 2 8 5 8 6 9 9 9 11 9 13 9 14 9 15 9 17 10 16 9 17 9 16 10 16 9 14 9 14 9 11 9 10 9 8 9 6 10 4 9 3 9 1 10 0 10-1 9-2 11-2 10-2 11-1 10 0 11 1 11 2 12 5 11 7 11 10 12 11 11 14 11 15 11 17 11 19 11 19 11 20 11 19 11 19 11 19 11 17M321 574l7 12 7 12 7 13 8 13 7 12 7 12 7 11 6 10 6 9 6 7 6 5 5 3 5 2 5 0 4-1 4-3 4-4 4-4 4-5 4-4 4-5 4-3 5-2 5-1 5 1 6 3 6 5 7 6 7 9 8 11 7 12 8 13 8 14 8 15 9 14 8 14 8 14 8 13 7 11 8 10 7 8 7 6 7 4 6 3 7 1 6-1 6-2 6-2 7-4 6-4 6-4 7-3 7-2 7-1 7 0 8 2 8 5 8 6 9 9 9 11 9 12 9 15 9 15 9 16 10 17 9 17 9 16 10 16 9 14 9 13 9 12 9 10 10 8 9 6 9 4 9 2 10 1 10 0 9-1 10-2 11-2 10-3 11-1 11-1 11 1 11 3 11 5 12 7 11 9 12 11 11 14 11 15 11 17 11 19 11 19 11 20 11 19 11 20 11 18 12 17M329 562l7 11 7 13 7 12 7 13 8 13 7 12 6 11 7 10 6 8 6 7 6 5 5 4 5 1 4 0 5-1 4-3 4-4 4-4 4-5 4-5 4-4 5-3 4-3 5-1 6 1 6 3 6 5 7 7 7 8 7 11 8 12 8 13 8 14 8 15 8 14 8 15 8 13 8 13 8 11 7 10 8 8 7 6 6 4 7 3 7 1 6-1 6-2 7-3 6-4 6-4 7-4 7-3 7-3 7-1 7 0 8 3 8 4 8 7 9 8 9 11 9 13 9 14 9 15 10 16 9 17 9 17 10 16 9 16 9 14 9 13 10 12 9 10 9 7 9 6 10 5 9 2 10 1 9-1 10-1 11-2 10-3 11-2 10-2 11 0 12 0 11 3 11 4 12 7 11 9 12 12 11 13 11 16 11 17 12 18 11 19 11 20 10 20 11 19 12 18 11 18M337 550l7 11 7 13 7 13 7 12 7 13 7 12 7 11 7 10 6 8 6 7 6 5 5 4 5 1 4 0 5-1 4-3 4-4 4-5 4-4 4-5 5-5 4-3 5-3 5-1 6 1 5 3 7 4 7 7 7 9 7 10 8 12 8 14 8 14 8 14 8 15 8 14 8 14 8 12 8 11 7 10 8 8 7 6 7 5 6 2 7 1 6-1 7-2 6-3 6-4 7-4 6-4 7-4 7-2 8-2 7 0 8 3 8 4 9 6 8 9 9 11 9 12 9 14 10 16 9 16 9 17 10 16 9 17 9 15 9 15 10 13 9 11 9 10 9 8 10 6 9 4 10 2 9 1 10-1 10-2 11-2 10-2 11-3 11-2 11-1 11 1 12 2 11 5 12 6 11 9 12 12 11 13 11 16 12 17 11 18 11 19 11 20 11 20 11 19 11 18 11 17M345 539l7 11 7 13 7 13 7 13 7 12 7 12 7 11 7 10 6 8 6 7 6 5 5 3 5 2 5 0 4-2 4-3 5-4 4-4 4-5 4-5 4-5 5-3 5-3 5-1 5 1 6 2 7 5 7 7 7 9 7 10 8 12 8 13 8 14 8 15 8 14 8 15 8 13 8 13 8 11 7 10 8 8 7 6 7 4 6 2 7 1 6-1 7-2 6-3 7-4 6-5 7-4 7-3 7-3 8-2 7 1 8 2 8 4 9 6 8 9 9 10 9 13 10 14 9 15 9 17 9 16 10 17 9 16 9 16 10 14 9 14 9 11 9 10 10 7 9 6 10 4 9 2 10 1 10-1 10-2 11-2 10-3 11-3 11-2 11-1 12 1 11 2 12 4 11 7 12 8 12 12 11 13 11 16 12 17 11 18 11 19 11 20 10 20 11 19 12 18 11 17M353 529l7 12 7 12 7 13 7 13 8 12 7 12 7 11 6 10 6 9 6 6 6 5 5 4 5 1 5 0 5-2 4-3M468 625l4-4 5-4 5-3 5-1 5 1 7 3 6 4 7 7 7 9 7 10 8 12 8 13 8 14 8 15 8 14 9 15 8 13 7 13 8 11 8 9 7 8 7 6 7 4 7 3 6 0 7-1 6-2 7-3 7-4 6-5 7-4 7-4 7-3 8-1 7 0 8 2 9 4 8 6 9 9 9 10 9 13 9 14 9 15 9 17 10 16 9 17 9 16 10 16 9 14 9 13 10 12 9 9 9 8 10 6 9 3 10 3 10 0 10-1 10-2 10-3 11-2 11-3 11-2 12-2 11 1 12 2 11 4 12 6 12 9 11 11 12 14 11 15 11 17 11 18 11 20 11 19 11 20 11 19 11 18 12 18M362 521l7 11 7 13 7 12 7 13 7 13 7 12 7 11 7 10 6 8 6 7 6 5 5 3 5 1 5 0 4-2M486 608l5-3 5-1 6 1 6 2 6 5 7 6 7 9 8 10 8 12 7 14 9 14 8 14 8 15 8 14 8 13 8 13 7 11 8 10 7 7 7 6 7 5 7 2 7 0 7-1 6-2 7-3 6-5 7-4 7-4 7-4 7-3 8-2 8 0 8 2 8 4 8 6 9 9 9 10 9 13 9 14 10 15 9 16 9 17 9 17 10 16 9 15 9 15 10 13 9 11 9 10 10 7 9 6 10 4 9 2 10 0 10-1 11-2 10-3 11-3 11-3 12-2 11-2 12 1 11 2 12 4 12 6 11 9 12 11 11 13 12 15 11 17 11 19 11 19 11 19 11 20 11 19 11 18 11 17M371 514l6 12 8 12 7 13 7 13 7 12 7 12 7 11 6 10 7 8 6 7 5 5 6 3 5 1 5 0M495 600l5-2 6-1 5 0 7 3 6 4 7 7 7 8 7 11 8 12 8 13 8 14 8 14 8 15 8 14 8 13 8 13 8 11 7 9 8 8 7 6 7 4 7 3 7 0 6-1 7-3 7-3 6-4 7-5 7-4 7-4 8-3 7-2 8 0 8 2 8 4 9 6 9 8 9 11 9 12 9 14 9 16 9 16 10 16 9 17 9 16 9 16 10 14 9 13 9 11 9 10 10 7 9 6 10 3 10 2 10 1 10-2 10-2 11-3 11-3 11-3 11-2 12-2 12 1 11 1 12 4 12 7 12 8 11 11 12 13 11 16 11 16 11 19 11 19 11 19 11 20 11 19 11 18 11 17M380 509l7 12 7 12 7 13 7 13 7 12 7 12 7 11 7 10 6 8 6 7 6 5 5 3 5 1M510 592l6-1 5 1 6 2 7 5 7 6 7 9 7 10 8 12 8 13 8 14 8 14 8 15 8 14 8 13 8 13 8 11 7 9 8 8 7 6 7 4 7 2 6 1 7-2 7-2M703 757l7-5 7-4 8-3 8-2 7 0 9 2 8 4 8 6 9 8 9 11 9 12 9 14 9 15 10 16 9 17 9 17 9 16 10 15 9 14 9 13 9 11 10 10 9 7 10 6 9 3 10 2 10 0 10-1 11-2 11-3 11-3 11-3 11-3 12-1 12 0 11 1 12 4 12 6 12 9 11 11 12 13 11 15 11 17 11 18 11 19 11 20 11 19 10 19 12 18 11 17M389 507l7 11 7 12 7 13 8 13 7 12 7 12 6 11 7 10 6 8 6 7 6 4 5 3M520 589l6-2 5 1 7 2 6 5 7 6 7 9 8 10 7 12 8 13 8 14 8 14 8 15 8 14 8 13 8 13 8 11 7 9 7 8 8 6 7 4 7 2 6 0 7-1M728 743l7-3 8-1 8-1 8 2 8 4 9 6 9 8 9 11 9 12 9 14 9 15 9 16 9 17 10 16 9 16 9 16 9 14 9 13 10 11 9 9 9 7 10 6 9 3 10 2 10 0 11-1 10-2 11-3 11-4 11-3 12-2 11-2 12 0 12 2 12 4 12 6 11 8 12 11 11 13 12 15 11 17 11 18 10 19 11 19 11 19 11 19 11 18 11 17M399 505l7 12 7 12 7 13 7 12 7 13 7 12 7 11 7 9 6 8 6 7 6 5M536 586l6 0 6 3 6 4 7 7 7 8 8 10 7 12 8 13 8 14 8 14 8 15 8 14 8 13 8 12 8 11 7 10 7 7 8 6 7 4 7 2 6 1M753 736l8 0 9 2 8 3 9 6 8 9 9 10 9 12 9 14 9 15 9 16 10 16 9 17 9 16 9 15 9 14 9 13 10 11 9 9 9 7 10 6 9 3 10 2 11 0 10-1 10-2 11-3 11-4 12-3 11-3 12-1 12 0 11 1 12 4 12 6 12 9 11 10 12 13 11 15 11 17 11 18 10 18 11 20 11 19 11 19 10 18 12 16M409 506l7 11 7 13 7 12 7 13 7 12 7 12 7 11 7 9 6 9 6 6M552 587l6 2 7 4 7 7 7 8 7 11 8 11 8 13 8 14 8 14 7 14 8 14 8 14 8 12 8 11 7 9 7 8 8 5 7 4 7 2M764 735l8 0 8 2 8 4 9 6 9 8 9 10 9 12 9 14 9 15 9 16 9 16 9 16 9 16 9 15 9 14 9 13 9 11 10 9 9 7 10 6 9 3 10 2 10 0 11-1M1038 934l12-1 12 0 11 1 12 4 12 6 12 8 11 11 11 13 12 14 11 17 10 18 11 18 11 19 10 19 11 19 11 18 11 16M420 508l7 12 6 12 8 12 7 13 7 12 6 12 7 10 7 10 6 8M563 589l6 2 6 4 7 7 7 8 8 10 7 12 8 13 8 13 8 14 8 15 8 14 7 13 8 12 8 11 7 9 7 7 8 6 7 4M782 736l9 2 8 4 8 6 9 8 9 10 9 12 9 14 9 14 9 16 9 16 9 17 9 15 9 15 9 14 9 13 9 11 9 9 10 7 9 5 10 4 10 1M1071 932l12 2 12 3 12 6 11 9 12 10 11 13 11 15 11 16 11 17 10 19 11 19 10 19 11 18 10 18 11 16M430 512l7 11 7 12 7 12 7 13 7 12 7 12 6 10 7 10M573 592l7 2 6 5 7 6 7 8 7 10 8 12 8 13 7 13 8 14 8 14 8 14 8 13 7 12 8 11 7 9 8 8 7 5M801 741l8 3 9 6 8 8 9 10 9 12 9 14 9 15 9 15 9 16 9 16 9 16 9 15 9 14 9 12 9 11 9 9 9 7 10 5 9 4M1093 935l11 4 12 6 11 8 12 10 11 13 11 14 11 16 10 18 11 18 10 19 11 19 10 18 11 17 11 17M441 516l6 11 7 12 7 13 7 12 7 12 7 12 7 10M590 599l7 4 7 6 7 9 7 10 7 11 8 13 8 13 8 14 7 14 8 14 8 13 7 12 8 10 7 9 8 8M811 744l9 4 8 6 9 8 8 10 9 12 9 13 9 15 9 15 9 16 8 16 9 16 9 14 9 14 9 12 9 11 9 9 10 7 9 6 10 3M1102 938l11 3 12 6 11 8 12 10 11 13 11 14 10 16 11 18 10 18 10 18 11 19 10 18 11 17 10 16M451 521l7 11 7 12 7 12 7 13 6 12 7 11 7 11M601 604l6 4 7 6 7 9 7 9 8 12 7 12 8 14 8 14 8 13 7 14 8 13 7 12 8 10 7 9M830 752l8 6 9 8 8 10 9 12 9 13 9 15 8 15 9 16 9 16 9 15 9 15 8 13 9 13 9 10 9 9 10 7 9 5M1122 944l12 6 11 8 11 10 11 13 11 14 11 16 10 17 10 18 10 18 11 19 10 18 10 17 11 16M462 527l6 11 7 11 7 13 7 12 7 12 6 11M611 609l7 4 6 7 8 8 7 10 7 11 8 12 7 14 8 13 8 14 7 14 8 12 7 12 8 11M840 757l8 6 9 8 8 10 9 12 9 13 8 14 9 15 9 16 8 16 9 15 9 14 9 14 8 12 9 11 9 8 10 7M1131 948l11 6 11 8 11 10 11 12 11 14 11 16 10 17 10 18 10 18 10 18 10 18 11 17 10 15M472 532l7 11 6 12 7 12 7 12 7 12M622 614l6 5 7 6 7 8 7 10 7 11 8 12 7 14 8 13 8 14 7 13 8 13 7 12 7 10M849 762l9 6 8 8 9 9 8 12 9 13 9 14 8 15 9 16 9 15 8 16 9 14 9 13 8 12 9 11 9 9M1139 952l11 5 12 8 11 10 10 12 11 14 10 16 11 17 10 17 10 18 10 18 10 18 10 17 10 15M482 537l7 11 6 11 7 12 7 13 7 11M632 619l6 5 7 6 7 8 7 10 7 11 8 12 7 13 8 14 7 13 8 13 7 13 8 12M851 763l8 3 8 6 9 8 8 10 9 11 8 13 9 14 9 15 8 16 9 15 8 15 9 14 8 13 9 12 9 11 9 8M1147 955l11 5 12 8 11 10 10 12 11 14 10 16 10 16 10 18 10 17 10 18 10 18 10 16 10 16M492 541l7 11 6 12 7 12 7 12M635 621l7 2 6 5 7 6 7 8 7 10 7 11 7 12 8 13 7 13 8 14 7 13 8 12M860 766l8 4 9 6 8 7 9 10 8 11 9 13 8 14 9 15 8 15 9 16 8 15 9 14 8 13 9 12 9 10 8 9M1144 954l11 3 12 6 11 7 11 10 10 12 11 14 10 15 10 17 10 17 10 18 9 17 10 17 10 17 11 15M502 545l6 10 7 12 6 12 7 12M645 624l6 3 7 4 6 6 7 8 7 10 8 11 7 12 7 13 8 13 7 13 8 13 7 13M861 767l8 2 9 3 8 6 8 8 9 9 8 12 9 12 8 14 9 15 8 15 8 15 9 15 8 14 9 13 8 12 9 10M1141 953l11 2 11 3 12 6 11 8 11 9 10 12 11 14 10 15 10 16 9 17 10 18 10 17 10 17 9 17 11 15M511 547l6 10 7 12 7 12M648 625l6 1 7 2 6 5 7 6 7 8 7 9 7 11 7 12 8 13 7 13 7 13 8 13 7 13M870 768l8 2 9 3 8 6 8 8 9 9 8 11 9 13 8 14 8 15 9 15 8 15 8 14 9 14 8 13 9 12 9 10M1137 953l12 0 11 2 12 3 11 6 11 7 11 10 10 12 11 13 10 15 9 16 10 17 10 18 9 17 10 17 10 16 10 15M520 547l6 11 7 11 7 12M658 626l6 0 6 3 6 4 7 6 7 8 7 9 7 11 7 12 8 13 7 13 7 13 8 13 7 12M871 767l8 0 9 2 8 4 8 5 8 8 9 10 8 11 8 12 9 14 8 15 8 14 9 15 8 15 8 14 9 13 8 11 9 10M1134 952l12-1 11 0 12 2 11 3 11 6 11 7 11 10 10 11 11 14 10 15 9 16 10 17 10 17 9 17 10 17 10 16 10 15M529 546l6 11 7 11 6 12 7 12M661 625l5-1 6 1 7 2 6 4 7 7 7 7 7 10 7 11 7 12 7 12 8 13 7 13 7 13 8 12M872 767l8-2 8 0 8 2 9 4 8 5 8 8 9 9 8 11 8 13 9 13 8 15 8 15 8 15 9 14 8 14 8 13 9 11 8 10M1132 951l11-2 11-2 12 0 11 2 12 3 11 6 11 7 10 10 11 11 10 14 10 15 10 16 9 16 10 17 9 18 10 16 10 16 10 15M537 544l6 10 7 12 6 11 7 12M664 624l5-2 6-1 6 1 6 2 7 4 6 6 7 8 7 10 7 10 8 12 7 13 7 13 8 13 7 13 7 12M865 769l8-4 8-2 8-2 8 0 8 2 9 3 8 6 8 7 8 10 9 11 8 12 8 14 9 14 8 15 8 15 8 14 9 14 8 13 8 11 9 10M1129 948l11-2 12-3 11-1 12 0 11 1 11 4 12 5 10 8 11 9 11 12 10 13 10 15 9 15 10 17 9 17 10 17 9 17 10 16 10 14M545 540l6 10 7 11 6 12 7 12 6 11M666 623l6-3 6-3 5-1 7 1 6 2 6 4 7 6 7 8 7 10 7 10 7 12 7 13 8 13 7 13 7 13 7 12M866 767l8-4 8-4 8-2 8-2 8 0 8 2 8 3 9 6 8 7 8 10 9 11 8 12 8 14 8 14 9 15 8 14 8 15 8 14 9 12 8 12 9 10 8 8M1127 944l11-3 11-3 12-2 11-1 12-1 11 2 11 3 12 6 10 7 11 9 11 12 10 13 9 15 10 15 10 17 9 17 9 17 10 17 10 15 10 15M553 534l6 10 7 12 6 11 7 12 6 11 7 11M674 617l6-4 6-2 6-1 6 0 6 3 7 4 6 6 7 8 7 9 7 11 7 11 8 13 7 13 7 13 7 13 8 12 7 11M860 767l7-3 8-5 8-3 7-4 8-3 8-1 9 0 8 1 8 4 8 5 9 8 8 9 8 11 9 12 8 14 8 14 8 15 8 14 9 15 8 13 8 13 9 11 8 10 9 9 9 6M1114 940l11-2 11-3 11-3 11-3 12-2 11-2 12 0 11 2 12 3 11 5 11 7 10 10 11 11 10 13 10 15 9 16 10 16 9 17 10 17 9 17 10 15 10 15M560 527l7 10 6 11 7 12 6 12 7 11 6 11 6 10 7 9M666 622l6-4 5-5 5-4 6-4 6-2 6-1 6 0 6 3 7 4 6 6 7 7 7 10 7 10 8 12 7 13 7 13 7 13 7 12 8 12 7 11 7 10 7 9M854 764l7-2 7-4 8-3 7-5 8-4 8-3 8-3 8-2 8 0 9 2 8 3 8 6 9 7 8 9 8 11 8 13 9 13 8 14 8 15 8 15 8 14 9 14 8 12 8 12 9 9 9 9 9 6 9 5 10 3 9 1 11 0 10-1 11-2 11-3 11-3 11-3 12-3 12-1 11-1 12 2 11 3 11 5 11 7 11 9 10 12 10 13 10 14 10 16 9 17 10 16 9 17 9 17 10 16 10 14M568 518l6 11 7 11 6 11 7 12 6 11 6 11 7 10 6 9 6 7 6 7 6 4M653 626l5-2 6-3 5-4 5-4 5-5 6-4 5-5 6-3 6-3 6-1 6 1 6 2 7 4 6 6 7 8 7 9 7 11 8 11 7 13 7 13 7 13 7 13 8 12 7 11 7 10 7 8 7 7 7 5 7 4 7 2 8 0 7-1 7-3 8-3 7-4 8-4 8-4 8-4 8-3 8-1 8-1 8 2 9 3 8 6 8 7 9 9 8 11 8 12 9 14 8 14 8 15 8 14 8 15 8 13 9 13 8 11 9 10 9 8 9 7 9 4 9 3 10 2 11-1 10-1 11-2 11-3 11-4 12-3 11-2 12-2 12 0 11 1 12 3 11 5 11 7 11 10 10 11 10 13 10 14 10 16 9 17 10 16 9 17 9 17 10 15 10 15M575 508l6 11 7 11 6 12 7 11 6 12 7 10 6 10 6 9 6 8 6 6 6 4 5 3 6 1 5 0 6-2 5-3 5-4 6-4 5-5 5-5 6-4 6-4 5-2 6-1 7 0 6 2 7 4 6 6 7 8 7 9 7 11 8 12 7 12 7 13 7 13 7 13 8 12 7 11 7 10 7 8 7 7 7 5 7 4 8 2 7 0 7-1 7-3 8-3 8-4 7-5 8-4 8-4 8-3 9-1 8-1 8 2 9 3 8 5 8 8 9 9 8 11 8 12 8 13 9 15 8 14 8 15 8 14 8 14 9 13 8 11 9 10 9 8 9 6 9 5 10 3 10 1 10-1 10-1 11-2 11-4 12-3 11-3 12-3 12-2 12 0 11 1 12 3 11 5 11 7 11 9 10 11 10 13 10 15 10 16 9 16 10 17 9 17 9 16 10 16 10 15M582 498l6 10 7 11 6 12 7 12 6 11 7 11 6 10 6 9 6 7 6 6 6 4 6 3 5 1 6 0 5-2 5-3 6-4 5-4 5-5 6-5 5-4 6-4 6-3 6-1 6 1 7 2 6 4 7 5 7 8 7 9 7 11 7 12 8 12 7 13 7 13 7 13 8 12 7 11 7 10 7 8 7 7 7 5 7 4 8 1 7 1 7-2 8-2 7-4 8-4 8-4 8-4 8-4 8-3 8-2 9-1 8 2 8 3 9 5 8 7 9 10 8 10 8 13 8 13 9 14 8 15 8 15 8 14 8 14 9 12 8 11 9 10 9 8 9 7 9 4 10 3 10 1 10 0 11-2 11-3 11-3 11-3 12-4 12-3 12-1 12-1 11 1 12 3 11 5 11 7 11 9 11 11 10 13 10 15 9 15 10 17 9 17 9 17 10 16 9 16 10 14M589 487l6 10 7 11 6 12 7 12 6 11 7 11 6 10 6 9 6 7 6 6 6 4 6 3 5 1 6 0 5-2 6-3 5-4 5-5 6-5 5-5 6-4 6-4 6-3 6-1 6 0 7 2 6 4 7 6 7 8 7 9 7 11 7 11 8 13 7 13 7 13 7 12 7 13 8 11 7 9 7 9 7 7 7 5 7 3 8 2 7 0 7-1 8-3 8-4 7-4 8-4 8-5 8-4 9-3 8-2 8 0 9 1 8 3 9 5 8 7 9 10 8 10 8 13 8 13 9 14 8 15 8 15 8 14 8 14 9 12 8 11 9 10 9 8 9 6 9 5 10 3 10 1 11-1 10-2 11-2 12-4 11-3 12-4 12-3 12-2 12-1 12 1 11 3 12 5 11 7 11 9 10 11 10 13 10 15 10 15 9 17 10 17 9 16 9 17 10 16 10 14M596 475l6 11 7 11 6 12 7 11 6 12 7 10 6 10 6 9 6 8 6 6 6 4 6 2 5 2 6-1 5-2 6-3 5-4 6-5 5-5 6-5 6-4 5-4 6-3 7-1 6 0 6 2 7 4 7 5 7 8 7 9 7 11 7 12 7 12 8 13 7 13 7 13 7 12 8 11 7 10 7 8 7 7 7 5 7 3 8 2 7 0 8-1 7-3 8-4 8-4 8-5 8-4 8-4 8-4 9-2 8 0 9 1 8 3 9 5 8 7 9 9 8 11 8 12 8 14 9 14 8 15 8 14 8 15 8 13 9 13 8 11 9 10 9 8 9 6 10 4 9 3 10 1 11-1 11-1 11-3 11-4 12-4 12-3 12-3 12-3 12 0 12 0 12 3 11 5 11 7 11 9 11 11 10 13 10 14 9 16 10 16 9 17 9 17 10 17 10 15 10 15M603 464l6 10 7 12 6 11 7 12 6 11 7 11 6 10 6 9 6 7 6 6 6 4 6 3 6 1 5-1 6-2 5-3 6-4 5-5 6-5 5-5 6-5 6-3 6-3 6-2 7 0 6 2 7 4 7 6 7 8 7 9 7 10 7 12 7 13 8 13 7 13 7 12 7 12 7 11 8 10 7 9 7 6 7 5 8 4 7 1 7 0 8-1 7-3 8-4 8-4 8-5 8-5 9-4 8-3 8-3 9 0 9 1 8 3 9 5 8 7 9 9 8 11 8 12 9 14 8 14 8 15 8 14 8 15 8 13 9 13 8 11 9 10 9 8 9 6 10 4 10 3 10 0 10 0 11-2 12-3 11-4 12-4 12-4 12-3 12-2 12-1 12 0 12 3 11 5 12 7 11 9 10 11 10 12 10 15 10 16 9 16 10 17 9 17 9 16 10 16 10 15M610 453l7 11 6 11 6 11 7 12 6 11 7 11 6 10 6 9 7 7 6 6 5 5 6 2 6 1 5-1 6-2 5-3 6-4 6-5 5-5 6-5 6-5 6-4 6-3 6-2 6 1 7 1 7 4 7 6 7 7 7 10 7 10 7 12 7 13 7 12 8 13 7 13 7 12 7 11 8 10 7 8 7 7 7 5 8 3 7 2 7 0 8-2 8-3 8-4 7-4 9-5 8-5 8-4 9-4 8-2 9-1 8 1 9 3 9 5 8 8 9 9 8 10 8 13 9 13 8 14 8 15 8 15 8 14 8 14 9 12 8 11 9 10 9 8 9 6 10 4 10 3 10 0 11 0 11-3 11-3 12-3 12-4 12-4 12-4 12-2 12-1 12 0 12 3 12 4 11 7 11 9 11 11 10 13 10 14 9 16 10 16 9 17 9 17 10 17 10 15 10 15M617 443l7 11 6 11 7 11 6 12 7 11 6 11 6 10 7 9 6 7 6 6 6 4 5 3 6 1 6-1 5-2 6-3 5-5 6-5 6-5 5-5 6-5 6-4 7-3 6-2 6 0 7 2 7 4 7 6 7 7 7 9 7 11 7 12 7 12 7 13 8 13 7 13 7 12 7 11 8 10 7 8 7 7 7 5 8 3 7 1 8 0 7-2 8-3 8-3 8-5 8-5 8-5 9-4 8-4 9-2 8-1 9 1 9 3 8 5 9 7 8 9 9 10 8 13 8 13 9 14 8 15 8 15 8 14 8 14 9 12 8 11 9 10 9 8 9 6 10 4 10 3 10 0 11-1 11-2 11-3 12-4 12-4 12-4 13-4 12-2 12-2 12 1 12 2 12 5 11 6 11 9 11 11 10 13 10 14 10 16 9 17 9 16 10 17 9 17 10 16 10 14M625 434l6 10 6 12 7 11 6 12 7 11 6 11 7 10 6 9 6 7 6 6 6 4 6 3 5 0 6 0 6-2 5-4 6-4 6-5 5-6 6-5 6-5 6-4 6-3 7-2 6 0 7 2 7 4 7 6 7 7 7 9 7 11 7 12 7 12 7 13 8 13 7 13 7 12 7 11 7 10 8 8 7 7 7 4 8 4 7 1 8 0 7-2 8-3 8-4 8-5 8-5 9-5 8-4 9-4 8-2 9-1 9 1 9 2 8 5 9 7 8 9 9 11 8 12 8 14 8 14 9 15 8 14 8 15 8 13 9 13 8 11 9 9 9 8 9 6 10 4 10 3 10 0 11-1 11-2 12-4 11-4 12-4 13-4 12-4 12-2 13-2 12 1 12 2 12 4 11 7 11 9 11 11 10 12 10 15 9 16 10 16 9 17 10 17 9 16 10 16 10 14M632 426l6 11 7 11 6 11 7 12 6 12 7 10 6 10 6 9 6 7 6 6 6 4 6 3 6 1 6-1 5-2 6-4 6-4 5-5M753 506l6-5 6-4 6-3 7-2 6 0 7 2 7 3 7 6 7 7 7 9 7 11 7 12 7 12 7 13 8 13 7 13 7 12 7 11 7 10 8 8 7 7 7 4 8 4 7 1 8 0 7-2 8-3 8-5 8-4 9-5 8-5 9-5 8-4 9-2 9-1 9 1 8 2 9 5 9 7 8 9 8 11 9 12 8 13 8 15 8 14 8 15 9 14 8 14 8 12 9 12 9 9 9 8 9 6 10 4 10 2 10 0 11-1 11-2 12-3 11-5 13-4 12-4 12-4 13-3 12-1 12 0 12 2 12 5 12 6 11 9 10 11 10 13 10 14 10 16 9 16 10 17 9 17 9 16 10 16 10 14M639 420l7 11 6 11 7 11 6 12 7 11 6 11 6 10 7 9 6 7 6 6 6 4 6 2 5 1 6-1 6-2 5-3M761 499l6-5 6-4 6-3 7-2 6 0 7 2 7 3 7 6 7 7 7 9 7 11 7 12 7 12 7 13 8 13 7 13 7 12 7 11 7 9 8 9 7 6 7 5 8 3 7 1 8 0 8-2 7-3 8-4 9-5 8-5 8-5 9-5 9-4 8-2 9-1 9 1 9 2 8 5 9 7 9 9 8 11 8 12 9 13 8 14 8 15 8 15 8 14 8 13 9 13 8 11 9 9 9 8 9 6 10 4 10 2 11 1 10-2 12-2 11-4 12-4 12-4 13-5 12-3 13-3 12-2 12 0 12 3 12 4 12 6 11 9 10 11 10 13 10 14 10 16 9 16 10 17 9 17 9 16 10 16 10 14M647 416l6 10 7 11 6 12 7 11 6 12 7 10 6 10 6 9 6 7 6 6 6 4 6 2 6 1 6-1 5-2M781 485l6-3 6-2 7 0 7 2 7 3 7 6 7 7 7 9 7 11 7 11 7 13 7 13 7 13 8 12 7 12 7 11 7 10 7 8 8 7 7 4 7 3 8 2 8-1 7-2 8-3 9-4 8-5 8-5M993 612l8-5 9-4 9-2 9-1 8 0 9 3 9 5 8 7 9 9 8 10 9 12 8 14 8 14 8 14 8 15 8 14 8 14 9 12 8 11 9 10 9 7 10 6 9 4 10 2 11 1 11-2 11-2 12-4 12-4 12-4 12-5 13-4 12-3 13-1 12 0 12 2 12 4 11 7 11 8 11 11 10 13 10 14 9 16 10 16 9 17 9 16 10 17 9 15 10 15M655 413l6 10 7 11 6 12 6 11 7 12 6 10 7 10 6 9 6 7 6 6 6 4 6 2 6 1 5-1M795 478l6-1 7 0 7 1 7 4 7 5 7 8 7 9 7 10 7 12 7 12 7 13 7 13 8 13 7 11 7 11 7 10 7 8 8 7 7 5 7 2 8 2 8-1 7-2 8-3M1009 603l9-4 9-2 9-1 8 0 9 3 9 5 9 7 8 8 8 11 9 12 8 13 8 14 8 15 8 14 8 15 8 13 9 12 8 11 9 10 9 7 9 6 10 4 10 2 11 1 11-2 11-2 11-4 12-4 13-5 12-4 13-4 12-3 13-2 12 1 12 2 12 4 11 6 11 9 11 10 10 13 10 14 9 16 10 16 9 17 9 16 9 17 10 15 10 14M663 412l6 10 6 11 7 12 6 11 7 11 6 11 6 10 6 9 7 7 6 5 6 5 5 2 6 1M803 477l6-2 7 0 7 2 7 3 7 6 7 7 7 9 7 11 7 11 7 13 7 12 7 13 7 13 7 12 8 10 7 10 7 8 7 7 8 4 7 3 8 2 7-1M1026 597l9-2 9-2 8 1 9 3 9 5 8 6 9 9 8 11 9 12 8 13 8 14 8 14 8 15 8 14 8 13 8 13 9 10 8 10 9 7 10 6 10 4 10 2 10 0 11-1 11-2 12-4 12-4 12-5 13-4 12-4 13-3 12-2 12 0 12 2 12 4 12 7 11 8 10 11 10 12 10 15 9 15 10 16 9 17 9 16 9 17 10 15 10 14M671 413l6 10 6 11 7 11 6 12 6 11 7 10 6 10 6 9 6 7 6 6 6 4 6 2M824 476l7 1 7 4 7 5 7 8 7 8 7 11 7 11 7 13 7 12 7 13 7 13 7 11 7 11 7 10 8 8 7 6 7 5 8 3M1051 593l9 1 9 3 9 4 8 7 9 9 8 10 8 12 8 13 8 14 8 15 8 14 8 14 8 13 9 13 8 10 9 10 9 7 9 6 10 4 10 2 10 0 11-1M1329 747l12-2 12 0 12 2 12 4 11 6 11 9 11 11 10 12 10 14 9 15 9 16 9 17 9 16 10 16 9 16 10 14M679 415l6 10 6 11 7 11 6 11 6 12 7 10 6 10 6 8 6 8 6 5 6 4M839 479l7 4 7 5 6 7 7 9 7 11 8 11 7 12 7 13 7 13 7 12 7 12 7 11 7 9 7 8 7 7 8 4 7 3M1076 598l9 5 9 6 8 9 8 10 8 12 8 13 8 14 8 15 8 14 8 14 8 13 8 12 9 11 9 9 9 8 9 5 9 4M1360 746l12 2 11 4 12 6 11 8 10 11 10 12 10 14 9 15 9 16 9 17 9 16 9 16 10 15 10 14M687 418l6 10 6 11 7 11 6 12 6 11 6 10 7 10 6 8 6 8 6 5M847 483l6 3 7 5 7 8 7 9 7 10 7 11 7 12 7 13 7 12 7 13 7 11 7 11 7 10 8 8 7 6 7 5M1084 601l8 5 9 6 8 9 8 10 9 12 8 13 7 14 8 14 8 14 8 14 8 13 8 12 9 11 8 9 9 8 9 5M1389 754l12 6 10 9 11 10 10 12 9 14 10 15 9 16 9 16 9 16 9 16 9 15 10 14M695 422l6 10 6 11 6 11 7 12 6 11 6 10 6 10 6 8 7 7M861 490l7 6 7 7 7 9 7 10 7 11 7 12 7 13 7 12 7 13 7 11 7 11 7 9 7 8 7 7M1099 610l9 6 8 9 8 10 8 12 8 13 8 13 8 14 8 15 8 13 8 13 8 12 8 11 8 9 9 8 10 5M1406 764l11 8 10 10 10 12 10 14 9 15 9 16 9 16 9 16 9 16 9 14 9 14M703 427l6 10 6 11 6 11 7 12 6 11 6 10 6 9 6 9M869 496l7 5 7 7 7 9 6 10 7 11 7 12 7 13 7 12 7 12 7 12 7 10 7 10 7 8M1106 615l9 6 8 9 8 10 8 11 8 13 8 14 7 14 8 14 8 13 8 13 8 12 8 11 9 9 8 7M1422 776l10 10 10 12 9 14 10 15 8 15 9 16 9 16 9 16 9 15 10 13M711 433l6 10 6 10 6 12 6 11 7 11 6 10 6 9M877 501l6 5 7 8 7 8 7 10 7 11 7 12 7 13 6 12 7 12 7 12 7 10 7 9 7 8M1113 620l8 6 8 9 9 10 7 12 8 12 8 14 8 14 7 13 8 14 8 13 8 12 8 10 9 9 8 7M1437 791l10 12 9 13 9 15 9 15 9 16 8 16 9 15 9 15 10 14M718 438l7 10 6 11 6 11 6 11 6 11 6 10M884 507l7 5 7 7 6 9 7 10 7 11 7 12 7 12 7 12 6 12 7 11 7 11 7 9M1119 625l9 7 8 8 8 10 8 12 8 12 7 14 8 13 8 14 7 14 8 12 8 12 8 10 8 9M1432 785l10 10 9 12 10 14 9 14 8 16 9 15 9 16 8 15 9 15 10 13M726 444l6 9 6 11 6 11 7 11 6 11M891 512l7 5 7 7 7 9 7 10 6 11 7 12 7 12 7 12 6 12 7 11 7 10M1126 630l8 7 8 8 8 10 8 11 8 13 7 13 8 14 8 13 7 14 8 12 8 12 8 10 8 9M1436 790l10 10 10 11 9 14 9 14 9 15 8 16 9 15 8 16 9 14 10 13M734 448l6 10 6 10 6 11 6 11 6 11M899 517l6 5 7 7 7 8 7 10 6 11 7 12 7 12 7 12 6 12 7 11 7 10M1132 635l9 6 8 8 8 10 7 12 8 12 8 13 7 14 8 13 7 13 8 13 8 12 8 10M1431 785l10 8 10 10 9 12 10 13 8 14 9 15 9 16 8 15 9 15 9 15 9 13M741 452l6 10 6 10 6 11 6 11M906 520l7 6 6 7 7 8 7 10 6 11 7 11 7 12 7 12 6 12 7 11M1131 633l8 5 8 6 8 9 8 9 8 12 7 12 8 13 7 14 8 13 7 13 8 13 8 11 8 10M1425 782l11 6 10 8 10 10 9 11 9 13 9 15 9 15 8 15 9 15 8 15 9 14 9 13M749 455l6 9 6 11 6 10 6 11M900 518l6 1 7 4 7 5 6 7 7 8 7 10 6 11 7 12 7 11 6 12 7 12 7 11M1129 633l8 3 8 4 9 6 8 9 7 9 8 12 8 12 7 13 8 13 7 14 7 13 8 12 8 11 8 11M1430 783l11 6 10 8 10 10 10 12 9 12 8 15 9 14 8 16 8 15 9 15 9 14 9 13M756 456l6 10 6 10 6 11M907 519l6 2 7 3 7 5 6 7 7 8 7 10 6 11 7 11 7 12 6 12 7 12 6 11M1127 633l8 1 9 2 8 5 8 6 8 8 8 10 8 11 7 12 8 13 7 13 7 14 8 13 7 12 8 11 8 10M1425 779l11 4 11 6 10 8 10 10 9 11 9 13 9 14 8 15 8 15 9 15 8 15 9 13 9 13M763 456l6 9 6 11 6 10M907 518l7 0 6 2 7 4 7 5 6 7 7 8 7 10 6 10 7 12 7 12 6 11 7 12M1125 633l9-1 8 1 8 2 9 5 8 6 8 8 8 10 7 11 8 12 7 13 7 13 8 13 7 13 8 12 7 12 8 10M1420 775l11 2 11 4 11 6 10 8 10 10 9 11 9 13 8 14 9 14 8 15 8 15 9 15 8 14 9 13M770 454l6 10 5 10 6 11M908 518l6-2 7 0 6 2 7 4 7 5 6 7 7 8 7 9 6 11 7 12 6 11 7 12 7 12M1123 632l9-2 8-1 9 1 8 3 9 4 8 6 8 8 7 10 8 11 8 12 7 13 7 13 7 13 8 13 7 12 8 11 8 10M1415 771l11 1 12 2 11 3 10 6 10 8 10 10 9 11 9 13 9 14 8 14 8 15 9 15 8 15 9 13 8 13M776 451l6 10 6 10 6 10M908 517l7-3 6-1 7 0 6 1 7 4 7 5 6 7 7 8 7 10 6 10 7 12 6 11 7 12 6 12M1121 631l9-3 9-3 8 0 9 0 8 3 9 4 8 7 8 8 8 9 7 11 8 12 7 13 7 13 7 13 8 13 7 12 8 11 8 10M1410 767l12-1 11 0 12 2 11 4 10 6 10 7 10 10 9 11 9 13 9 14 8 14 8 15 8 15 9 14 8 14 9 13M783 446l6 10 6 10 6 11M902 520l7-5 6-3 7-3 6-2 7 0 6 2 7 4 7 5 6 6 7 9 7 9 6 11 7 11 6 12 7 12 6 11M1120 629l9-4 8-3 9-3 9 0 8 0 9 3 8 4 8 6 8 8 8 10 7 11 8 12 7 13 7 13 8 13 7 13 7 12 8 11 8 10M1405 763l12-3 12-1 12 0 11 2 11 3 11 6 10 8 9 9 10 12 8 12 9 14 8 15 8 14 9 15 8 15 8 13 9 13M790 440l6 10 6 10 5 10M903 518l6-5 6-4 7-4 6-3 7-1 7 0 6 1 7 4 7 5 6 7 7 8 7 9 6 11 7 11 6 12 7 12 6 11 7 11M1118 626l9-5 9-4 9-3 8-2 9-1 9 1 8 2 8 4 9 7 7 7 8 10 8 11 7 12 7 13 8 13 7 13 7 13 8 12 7 11 8 10 8 8M1401 757l12-3 12-3 12-1 12 0 11 2 11 3 10 6 11 8 9 9 9 11 9 13 9 14 8 14 8 15 8 15 9 14 8 14 9 13M796 433l6 9 6 10 6 11 6 11M903 515l6-5 7-5 6-4 7-4 6-3 7-1 7 0 6 1 7 3 7 6 6 6 7 8 7 10 6 11 7 11 6 12 7 11 6 12 7 11M1117 622l9-5 8-5 9-4 9-3 9-2 9-1 8 0 9 3 8 4 8 6 8 8 8 10 7 10 8 12 7 13 7 13 8 13 7 13 7 12 8 11 8 10 8 9 8 6M1385 755l12-4 12-4 12-4 12-2 12-2 12 0 11 2 11 4 11 5 10 8 10 9 9 11 9 13 8 14 8 14 8 15 9 15 8 14 8 14 9 13M803 424l6 10 6 10 5 10 6 11 6 10M897 515l7-4 6-5 6-5 7-5 6-4 7-4 6-3 7-2 7 0 6 2 7 3 7 5 7 7 6 8 7 9 6 11 7 11 6 12 7 12 6 11 7 11 7 10M1108 620l8-4 9-4 8-5 9-5 9-4 9-3 8-3 9-1 9 1 8 2 9 4 8 7 8 7 8 10 7 11 8 12 7 12 7 13 7 14 8 12 7 12 8 11 7 10 9 9 8 7 9 5M1381 748l12-4 12-4 12-5 12-3 12-3 12-2 12 0 12 2 11 4 10 5 11 8 9 9 9 11 9 13 9 14 8 14 8 15 8 15 9 14 8 14 9 12M809 415l6 9 6 10 6 11 6 11 6 10 6 10 5 9M892 510l6-2 6-3 6-4 7-5 6-5 6-5 7-5 7-3 6-3 7-2 7 0 7 1 6 4 7 5 7 6 6 9 7 9 6 11 7 11 6 12 7 11 6 12 7 11 7 10 6 8M1107 612l8-3 8-4 9-4 9-5 9-5 8-4 9-4 9-2 9-1 9 0 8 3 9 4 8 6 8 8 8 9 7 11 8 12 7 13 7 13 7 13 8 13 7 12 8 11 7 10 9 8 8 7 9 5 9 3 10 2 10 0 11-1 11-3 12-3 11-4 12-5 13-4 12-4 12-3 12-1 12-1 12 2 11 4 10 5 10 8 10 9 9 11 9 13 9 13 8 15 8 15 8 14 9 15 8 13 9 13M816 405l6 9 5 10 6 11 6 10 6 11 6 10 6 9 6 8 6 6 6 6 5 3 6 2 6 1 6-1 7-2 6-3 6-5 6-4 7-5 6-6 7-4 7-4 6-3 7-2 7 0 7 1 6 4 7 5 7 6 7 8 6 10 7 10 6 12 7 11 6 12 7 12 6 10 7 10 7 9 6 8 7 5 8 5 7 2 8 1 7 0 8-2 9-3 8-4 9-5 8-5 9-5 9-4 9-4 9-2 9-1 9 0 8 2 9 5 8 6 8 7 8 10 7 11 8 12 7 12 7 13 7 14 8 12 7 12 8 11 8 10 8 9 8 6 9 5 10 4 9 1 11 0 10-1 12-3 11-3 12-5 12-4 12-4 13-4 12-3 12-2 12 0 12 1 11 4 10 5 11 8 9 9 10 11 8 13 9 13 8 15 8 15 9 14 8 15 8 13 9 13M822 394l6 10 6 10 6 10 6 11 6 10 5 10 6 9 6 8 6 7 6 5 6 4 6 2 6 0 6 0 6-3 6-3 7-4 6-5 7-5 6-6 7-4 7-4 6-3 7-2 7 0 7 1 7 3 6 5 7 7 7 8 6 10 7 10 6 11 7 12 6 12 7 11 6 11 7 10 7 9 7 7 7 6 7 4 7 3 8 1 8-1 8-2 8-3 9-4 8-5 9-5 9-5 9-4 9-4 9-3 9-1 9 1 8 2 9 4 8 6 8 8 8 9 7 11 8 12 7 13 7 13 8 13 7 13 7 12 8 11 8 9 8 9 8 7 9 5 10 3 10 1 10 0 11-1 11-3 12-4 12-4 12-5 12-4 13-4 12-3 12-2 12 0 12 1 11 3 11 6 10 7 10 10 9 11 9 12 8 14 9 14 8 15 8 15 8 14 9 14 9 13M829 384l6 9 5 11 6 10 6 11 6 10 6 10 6 9 6 8 6 7 6 5 5 3 6 2 7 1 6-1 6-2 6-4 6-4 7-5 6-5 7-5 7-5 7-4 6-4 7-1 7-1 7 2 7 3 6 5 7 6 7 9 6 9 7 11 7 11 6 12 7 11 6 12 7 11 6 10 7 8 7 8 7 6 7 4 8 2 7 1 8-1 8-2 9-3 8-4 9-5 9-5 9-5 9-5 9-3 9-3 9-1 9 0 8 2 9 4 8 6 8 8 8 9 8 11 7 12 7 13 7 13 8 13 7 13 7 12 8 11 8 10 8 8 9 7 9 5 9 3 10 1 11 0 10-1 12-3 11-4 12-4 13-5 12-5 13-4 12-3 12-2 12 0 12 1 11 3 11 6 10 7 10 9 9 11 9 13 9 14 8 14 8 15 8 15 9 14 8 14 9 12M835 374l6 9 6 10 6 11 6 11 6 10 5 10 6 9 6 8 6 6 6 6 6 3 6 2 6 1 6-1 6-3 7-3 6-4 7-5 6-6 7-5 7-5 6-4 7-3 7-2 7-1 7 2 7 3 7 5 6 6 7 9 7 9 6 11 7 11 6 12 7 11 6 12 7 11 6 10 7 8 7 8 7 5 7 5 8 2 8 1 7-1 9-2 8-3 9-5 8-5 9-5 9-5 10-4 9-4 9-3 9-1 9 0 8 2 9 4 8 6 8 8 8 9 8 11 7 12 7 13 8 13 7 13 7 13 7 12 8 11 8 9 8 9 9 6 9 5 9 3 10 2 11 0 11-2 11-3 12-4 12-4 12-5 13-5 12-4 13-3 12-3 12 0 12 1 11 3 11 6 10 7 10 9 10 11 8 13 9 14 8 14 8 15 8 15 9 14 8 14 9 12M842 364l5 10 6 10 6 11 6 10 6 11 6 10 6 9 6 7 6 7 6 5 6 4 6 2 6 0 6-1 6-2 6-4 7-4 6-5 7-6 7-5 7-5 6-4 7-4 7-1 7-1 7 1 7 4 7 4 6 7 7 8 7 10 6 10 7 11 6 12 7 12 6 11 7 11 7 10 6 9 7 7 7 6 8 4 7 2 8 1 8-1 8-2 8-3 9-4 9-5 9-6 9-5 9-5 9-4 10-2 9-2 8 0 9 2 9 4 8 6 8 8 8 9 8 11 7 12 7 13 7 13 8 13 7 13 7 12 8 11 8 10 8 8 9 7 9 5 9 3 10 1 11 0 11-2 11-3 12-4 12-5 13-5 12-4 13-5 13-3 12-2 12-1 12 1 11 3 11 6 10 7 10 9 10 11 8 13 9 13 8 15 8 15 8 15 9 14 8 14 9 12M848 356l6 9 6 11 6 10 6 11 5 10 6 10 6 9 6 8 6 7 6 5 6 3 6 2 6 1 6-2 7-2 6-4 7-4 6-5 7-6 7-5 6-5 7-4 7-4 7-2 7 0 7 1 7 3 7 5 7 7 6 8 7 9 6 11 7 11 6 12 7 12 6 11 7 11 7 10 6 8 7 8 7 5 8 4 7 3 8 1 8-1 8-2 9-4 8-4 9-5 9-6 9-5 10-5 9-4 9-3 9-1 9 0 9 2 8 4 9 6 8 8 8 9 7 11 8 12 7 12 7 13 7 14 8 12 7 12 8 11 8 10 8 8 9 7 9 5 9 3 10 1 11 0 11-2 11-3 12-4 13-5 12-5 13-5 12-4 13-4 12-2 13-1 11 1 12 4 11 5 10 7 10 9 9 11 9 13 9 13 8 15 8 15 8 14 8 15 9 13 9 13M855 349l5 9 6 10 6 11 6 11 6 10 6 10 6 9 6 8 6 6 6 5 6 4 6 2 6 0 6-1 6-3 7-3 6-5 7-5 7-5 6-6 7-5 7-4 7-4 7-2 7 0 7 1 7 3 7 5 7 7 6 8 7 9 6 11 7 11 6 12 7 11 6 12 7 11 7 9 6 9 7 7 7 6 8 4 7 3 8 0 8-1 8-2 9-3 9-5 8-5 10-5 9-6 9-5 9-4 10-3 9-1 9 0 8 2 9 4 8 6 8 7 8 10 8 11 7 11 8 13 7 13 7 13 7 13 8 12 7 11 8 10 8 8 9 7 9 4 10 3 10 2 11-1 11-2 11-3 12-4 12-5 13-5 12-5 13-4 13-4 12-2 13-1 11 1 12 3 11 5 10 8 10 9 9 11 9 12 9 14 8 14 8 15 8 15 8 14 9 14 9 12M861 343l6 9 6 10 6 11 6 11 5 10 6 10 6 9 6 8 6 6 6 5 6 4 6 2 6 0 6-1 7-3 6-3 7-5 6-5 7-6 7-5 7-5 7-5 7-3 7-2 7-1 7 2 7 3 7 4 6 7 7 8 7 9 6 11 7 11 6 12 7 12 6 11 7 11 6 10 7 8 7 8 7 5 7 4 8 3 8 0 8-1 8-2 9-3 8-5 9-5 10-6 9-5 9-5 9-4 10-3 9-2 9 1 9 2 8 3 9 6 8 8 7 9 8 11 7 12 8 12 7 14 7 13 7 12 8 12 7 11 8 10 9 8 8 7 9 4 10 3 10 2 11-1 11-2 11-3 12-4 13-5 12-5 13-5 13-5 12-3 13-3 12-1 12 1 11 3 11 6 11 7 10 9 9 11 9 12 8 14 8 14 9 15 8 15 8 14 8 14 9 12M868 339l5 9 6 10 6 11 6 10 6 11 6 9 6 9 5 8 6 7 6 5 6 3 6 2 7 0 6-1 6-2 7-4M991 405l7-5 7-4 7-4 7-2 7 0 7 1 6 3 7 5 7 6 7 8 6 9 7 11 6 11 7 12 6 12 7 11 6 11 7 10 7 8 7 7 7 6 7 4 8 2 7 1 9-1 8-2 8-4 9-4 9-6 9-5 10-5 9-5 9-5 10-3 9-1 9 0 9 2 8 4 8 5 9 8 7 9 8 11 7 12 8 13 7 13 7 13 7 12 8 12 7 11 8 10 8 8 9 7 9 4 10 3 10 1 11 0 11-2 11-3 12-5 12-5 13-5 13-5 13-4 12-4 13-2 12-1 12 1 11 3 11 5 11 7 10 9 9 11 9 12 8 14 8 14 8 15 9 15 8 14 8 13 9 13M874 336l6 9 6 10 6 11 5 10 6 11 6 9 6 9 6 8 6 7 6 5 6 3 6 2 6 0 6-1M1011 393l7-4 7-2 7 0 7 1 7 3 7 4 7 7 6 8 7 9 7 11 6 11 6 12 7 11 6 12 7 10 6 10 7 9 7 7 7 6 8 3 7 3 8 0 8-1 8-2 9-4M1232 492l10-4 9-3 9-2 9 0 9 2 9 4 8 6 8 7 8 9 7 11 8 12 7 13 7 12 7 13 8 13 7 12 8 11 7 10 9 8 8 6 9 5 10 3 10 1 11-1 11-2 12-3 12-4 12-5 12-5 13-5 13-5 13-4 12-2 12-1 12 1 12 3 11 5 10 7 10 9 9 11 9 12 8 14 9 14 8 15 8 14 8 15 8 13 9 13M880 335l6 9 6 10 6 11 6 10 6 10 5 10 6 9 6 8 6 6 6 5 6 4 6 2 6 0M1032 386l7-1 7 1 7 3 6 5 7 6 7 8 6 10 7 10 6 11 7 12 6 12 7 11 6 11 7 9 6 9 7 7 7 6 8 4 7 2 8 0 8 0M1257 483l10-2 9 0 8 2 9 4 8 6 8 7 8 9 8 11 7 12 7 12 7 13 7 13 8 13 7 12 8 11 7 9 9 8 8 7 9 4 10 3 10 1 11 0 11-2 11-4 12-4 13-5 12-5 13-5 13-5 12-3 13-3 12-1 12 1 11 3 11 5 11 7 9 9 10 11 8 12 9 14 8 14 8 15 8 14 8 14 9 14 8 12M887 335l6 10 5 10 6 10 6 10 6 11 6 9 5 9 6 8 6 6 6 5 6 4 6 2M1052 387l7 3 7 4 6 7 7 8 7 9 6 10 6 11 7 12 6 12 7 11 6 10 7 10 6 9 7 7 7 5 8 4 7 3M1281 481l9 2 9 4 8 6 8 7 8 9 7 11 8 11 7 13 7 13 7 13 7 12 8 12 7 11 8 9 8 8 9 7 9 4 9 3 10 1 11 0M1543 604l12-2 12-1 12 1 12 2 10 5 11 7 9 9 10 11 8 12 9 14 8 14 8 14 8 15 8 14 8 13 9 13M893 337l6 9 6 10 5 11 6 10 6 10 6 10 6 9 5 8 6 6 6 5 6 3M1058 388l7 3 7 5 6 6 7 8 7 10 6 10 6 11 7 11 6 12 7 11 6 11 7 10 6 8 7 7 7 6 7 4M1296 485l8 3 9 6 8 8 7 9 8 10 7 12 7 12 7 13 7 13 7 12 8 12 7 11 8 9 8 8 9 7 9 4 9 3M1584 603l11 2 11 5 10 7 10 9 9 11 8 12 9 13 8 14 8 15 8 14 8 14 8 14 9 12M899 340l6 10 6 9 6 11 5 10 6 10 6 10 6 9 6 7 5 7 6 5M1071 395l7 4 6 7 7 8 6 9 7 10 6 11 7 11 6 12 6 11 7 11 6 9 7 9 7 7 7 5M1310 491l8 6 8 7 7 9 8 11 7 12 7 12 7 13 7 12 7 13 7 11 8 11 8 10 8 7 8 7M1610 613l10 7 9 9 9 10 9 12 8 14 8 14 8 14 8 14 8 14 8 13 9 12M906 345l5 9 6 10 6 10 6 10 5 10 6 10 6 9 6 7 5 7M1083 404l7 6 7 8 6 9 7 10 6 11 6 11 6 12 7 11 6 10 7 10 6 8 7 7 7 6M1323 501l8 8 7 9 8 10 7 11 7 13 7 12 7 13 7 12 7 12 7 10 8 10 8 8M1642 643l8 12 8 13 8 14 8 14 8 14 8 14 8 13 9 12M912 349l5 10 6 9 6 11 6 10 5 10 6 9 6 9 5 8 6 6M1096 415l6 8 7 9 6 10 6 11 7 11 6 11 6 11 6 11 7 9 6 9 7 7M1343 522l7 11 7 11 7 12 7 13 7 12 7 13 7 11 8 11 7 9M1669 686l8 14 8 14 7 14M1701 741l8 12M918 355l5 9 6 10 6 10 5 10 6 10 6 9 5 9 6 8M1101 420l7 8 6 9 6 10 7 11 6 11 6 12 6 10 7 11 6 9 7 9M1347 528l7 10 8 11 7 12 6 13 7 12 7 12 7 12 8 10 7 10M1703 745l8 12M924 360l5 9 6 10 6 10 5 10 6 10 6 10 5 8M1107 426l6 8 6 9 7 10 6 10 6 12 6 11 6 11 7 10 6 9 7 9M1351 533l8 10 7 12 7 12 7 12 6 12 7 12 7 12 7 10M1705 750l8 12M930 366l5 9 6 9 6 10 5 10 6 10 5 10M1112 431l6 8 7 9 6 10 6 11 6 11 6 11 7 11 6 10 6 9M1348 530l8 8 7 11 7 11 7 12 7 12 6 12 7 12 7 12 7 10M1699 741l8 13 8 12M936 370l5 9 6 10 5 10 6 10 5 10 6 9M1111 430l6 6 7 8 6 9 6 10 6 10 6 11 7 11 6 11 6 10 6 10M1353 534l7 9 7 10 7 11 7 12 7 12 6 13 7 12 7 11 7 10M1678 705l8 13M1709 758l8 11M941 374l6 9 5 10 6 10 6 10 5 10M1116 434l7 6 6 8 6 9 7 10 6 10 6 11 6 11 6 11 6 10M1357 538l7 9 8 10 7 11 6 12 7 12 7 12 6 12 7 11 7 10M1681 708l8 13M1712 761l8 11M115 627l14 4 14 5 14 6 14 5 13 4 13 4 13 2 12 2 11-1 11-2 10-3 10-6 9-7 9-8 8-10 8-11 8-12 8-12 7-13 8-12 8-12 8-11 8-10 9-8 9-7 9-5 9-2 10-2 10 1 11 2 10 4 11 4 10 5 11 6 10 5 10 5 10 4 10 4 9 2 9 0 9-1 8-2 8-4 8-6 7-7 8-9 7-10 7-10 7-11 7-12 7-11 7-11 7-10 8-9 7-8 7-6 8-4 8-3 8-1 8 1 8 2 8 3 8 4 8 5 8 6 7 5 8 6 8 4 7 4 8 3 7 1 7 0 7-2 6-3 7-5 7-6 6-7 7-9 6-9 7-10 6-11 7-10 6-10 7-10 6-8 7-7 6-6 7-4 6-3 6-1 7 0 6 2 6 3 7 5 6 4 6 6 6 5 6 6 6 4 5 4M122 640l14 4 14 5 14 5 14 5 14 4 13 4 12 2 12 2 11-1 11-2 10-4 10-5 9-7 9-9 8-10 8-11 8-11 7-13 8-12 8-13 8-12 8-11 8-9 9-9 8-6 10-5 9-3 10-1 10 0 11 3 10 3 10 4 11 5 10 6 11 5 10 5 10 4 9 3 9 2 9 1 9-1 8-3 8-4 8-6 8-7 7-8 7-10 7-11 7-11 7-11 7-12 8-10 7-10 7-10 7-7 8-6 7-5 8-3 8-1 8 1 8 2 8 3 8 4 8 5 8 6 8 5 7 5 8 5 7 4 8 2 7 2 7-1 7-1 6-3 7-5 7-6 6-8 7-8 6-10 7-10 6-10 7-11 6-10 6-9 7-9 6-7 7-6 6-4 7-3 6-1 7 1 6 1 6 4 6 4 6 5 6 5 6 5 6 6 6 4 6 4M130 653l14 4 14 5 14 5 14 5 13 4 13 4 12 2 12 1 11 0 11-2 10-4 10-6 9-7 9-8 8-10 8-11 8-12 8-13 7-12 8-12 8-12 8-11 8-10 9-8 9-7 9-5 9-3 10-1 10 1 10 2 11 3 10 4 11 5 10 5 10 6 10 4 10 5 10 3 9 2 9 0 9-1 8-2 8-5 8-5 7-8 8-8 7-10 7-11 7-11 7-11 7-11 7-11 7-10 7-9 8-8 7-6 8-5 8-3 7-1 8 1 8 2 8 3 8 4 8 5 8 5 8 6 7 5 8 4 7 4 8 3 7 1 7 0 6-2 7-3 7-5 7-6 6-8 7-8 6-10 6-10 7-10 6-10 7-11 6-9 7-8 6-8 7-6 6-4 7-3 6-1 6 1 7 1 6 3 6 5 6 4 6 6 6 5 6 5 6 5 5 4M138 667l14 4 14 5 14 4 13 5 13 4 13 4 13 2 12 1 11 0 11-2 10-4 9-6 9-7 9-8 8-10 8-11 8-12 8-13 7-12 8-13 8-11 8-11 8-10 9-9 9-6 9-5 9-3 10-1 10 0 11 2 10 3 10 5 11 4 10 6 10 5 10 4 10 5 9 3 10 2 9 0 8-1 8-3 8-4 8-6 8-7 7-9 7-9 7-11 7-11 7-11 7-12 7-11 8-10 7-9 7-8 8-6 7-4 8-3 8-1 8 0 8 2 8 3 7 4 8 5 8 6 8 5 7 5 8 4 7 4 8 2 7 2 7-1M801 477l6-7 7-7 6-9 7-9 6-10 7-11 6-10 7-10 6-9 7-9 6-7 7-6 6-4 7-3 6-1 6 0 6 2 7 3 6 4 6 5 6 5 6 5 6 5 5 5 6 4M146 681l14 4 13 4 14 5 14 5 13 4 13 3 12 2 12 1 11 0 11-2 10-4 10-6 9-7 8-8 9-10 8-11 7-12 8-13 8-12 7-13 8-12 8-10 8-10 9-9 9-6 9-5 10-3 9-2 10 1 11 2 10 3 10 4 11 5 10 5 10 5 10 5 10 4M563 589l8-4 8-6 7-7 8-9 7-10 7-10 7-11 7-12 7-11 7-11 7-10 7-9 8-8 7-6 8-5 7-3 8-1 8 1 8 1 8 4 8 4 8 5 7 5 8 5 8 5 7 4 7 4M820 474l6-9 7-9 6-11 7-10 6-10 7-10 6-10 7-8 6-7 7-6 6-5 6-3 7-1 6 0 6 2 6 3 7 4 6 5 5 5 6 5 6 5 6 5 6 4M153 694l14 4 14 5 14 4 13 5 13 4 13 3 13 2 11 1 11 0 11-3 10-3 10-6 9-7 8-9 9-10 8-11 8-12 7-12 8-13 8-12 7-12 8-11 9-10 8-8 9-7 9-5 10-3 9-1 10 0 11 2 10 3 10 4 10 5 11 5 10 5M577 596l8-6 8-7 7-9 7-9 7-11 7-11 7-11 7-12 7-11 8-10 7-9 7-7 8-7 7-4 8-3 8-2 7 1 8 2 8 3 8 4 8 5 8 5 7 5 8 5 7 4M832 475l7-9 6-10 7-11 6-10 7-10 6-9 6-9 7-7 6-6 7-4 6-3 7-2 6 1 6 1 6 3 6 4 6 5 6 5 6 5 6 5 5 5 6 4M161 707l14 4 14 4 13 5 14 5 13 3 12 4 13 2 11 1 12-1 10-2 10-4 10-6 9-7 8-9 9-10 8-11 8-12 7-12 8-13 8-12 7-12 8-11 9-10 8-8 9-7 9-5 10-3 9-1 10 0 10 2 11 3 10 4 10 4 10 5M592 601l7-7 7-9 8-10 7-10 7-11 7-12 7-11 7-11 7-10 7-9 8-8 7-6 8-5 7-3 8-1 8 0 8 2 7 3 8 4 8 5 8 5 7 5M838 485l7-9 6-10 6-11 7-10 6-10 7-9 6-9 7-7 6-6 7-5 6-3 6-1 7 0 6 2 6 3 6 4 6 4 6 5 6 6 5 5M168 719l14 4 14 4 13 5 14 4M283 745l11-2 10-4 10-6 9-7 8-9 9-10 8-11 7-12 8-12 8-13 7-12 8-12 8-11 9-10 8-8 9-7 9-5 9-3 10-1 10 0 10 1 10 3 11 4 10 5M605 604l8-9 7-10 7-10 7-11 7-12 7-11 7-11 7-10 8-9 7-8 7-6 8-5 8-3 7-1 8 0 8 2 8 3 7 4 8 4 8 5M850 485l7-10 6-11 7-10 6-10 7-9 6-9 7-7 6-6 7-5 6-3 6-1 6 0 7 2 6 3 6 4 6 4 5 5 6 5M175 730l14 4 13 4 14 4M301 753l10-4 9-6 9-7 9-9 8-10 8-11 8-12 8-12 7-13 8-12 8-12 8-11 8-10 9-8 8-7 10-5 9-3 10-2 10 0 10 2 10 3M612 613l7-9 7-10 7-10 7-11 7-12 7-11 7-11 8-10 7-9 7-8 8-6 7-5 8-3 7-1 8 0 8 1 8 3 7 4 8 5M856 493l7-10 6-11 7-10 6-10 7-10 6-8 7-7 6-6 6-5 7-3 6-1 6 0 6 2 7 2 6 4 5 5 6 5M181 739l14 4 14 4 13 4M317 758l9-6 9-7 9-9 8-10 8-11 8-12 8-13 7-12 8-13 8-12 8-11 8-9 9-9 9-7 9-5 9-3 10-2 10 1 10 1M625 611l7-9 7-11 7-11 7-11 7-12 8-11 7-10 7-9 7-8 8-6 7-5 8-3 8-1 7 0 8 2 8 3 8 3M869 489l6-10 7-10 6-11 7-9 6-8 7-8 6-6 6-4 7-3 6-2 6 0 6 2 6 3 6 4M187 747l14 3 13 5M332 759l9-7 9-9 8-10 8-11 8-12 8-13 7-12 8-13 8-12 8-11 8-10 9-8 9-7 9-5 9-3 10-2 10 0M631 618l7-10 7-11 7-11 7-11 7-12 8-11 7-10 7-9 7-8 8-6 7-5 8-3 8-2 7 1 8 1 8 3M875 495l6-11 7-10 6-10 7-10 6-8 7-8 6-6 6-4 7-3 6-2 6 0 6 2 6 3M192 753l14 3M346 757l9-9 8-10 9-11 7-12 8-13 8-12 8-13 8-12 8-11 8-10 9-8 8-7 10-5 9-4 10-1M637 622l7-10 7-11 7-11 7-11 7-12 7-10 8-11 7-9 7-8 8-6 7-5 8-3 8-1 7 0M880 498l7-10 6-11 7-10 7-9 6-9 7-7 6-6 6-5 7-3 6-1 6 0 6 1M197 757l14 3M351 761l9-9 9-10 8-12 8-12 7-12 8-13 8-12 8-12 8-12 8-9 9-9 9-7 9-5 9-4M642 625l7-10 8-11 7-11 7-12 7-11 7-11 7-10 8-9 7-8 8-7 7-5 8-3 7-1M880 510l6-10 7-10 6-11 7-10 7-9 6-9 7-7 6-6 6-5 7-3 6-1 6 0M201 759l14 3 14 4 13 5 14 4 13 3M365 754l8-10 8-12 8-12 8-12 8-13 8-13 8-12 8-11 8-10 9-9 9-7 9-5M648 626l7-10 7-11 7-11 7-11 8-12 7-11 7-10 7-10 8-7 7-7 8-5 8-3 7-1M886 511l6-10 7-11 7-10 6-10 7-10 6-8 7-8 6-6 7-5 6-3 6-1M205 759l14 4 13 4 14 4 14 4 13 4M369 754l9-10 8-11 8-13 8-12 8-13 7-13 8-12 9-11 8-10 9-9 9-7M653 626l7-10 8-11 7-11 7-12 7-12 7-11 8-10 7-9 8-8 7-7 8-5 7-3M892 510l6-10 7-10 7-11 6-10 7-10 6-9 7-7 6-6 7-5 6-3M208 758l14 4 14 4 14 4 13 4 13 4M382 743l8-12 8-12 8-13 8-12 8-13 8-12 8-12 9-10 8-9 9-7M658 624l8-10 7-11 7-11 7-12 8-12 7-11 7-10 8-9 7-8 8-7 7-5M891 518l7-10 7-10 6-11 7-10 6-11 7-9 7-9 6-8 7-6 6-4M211 756l14 4 14 4 14 4 13 4 13 4M386 741l8-12 8-12 8-13 8-13 8-13 8-12 8-12 9-10 9-9M664 621l7-10 7-11 8-11 7-12 7-12 7-11 8-10 7-10 8-8 7-6M897 515l7-10 7-10 6-11 7-11 7-10 6-10 7-9 7-7 6-6 7-5M213 753l14 3 15 4 13 5 14 4M389 737l9-11 8-13 8-13 8-13 8-13 8-12 9-12M661 627l8-10 7-10 8-11 7-11 7-12 8-12 7-11 7-11 8-9 8-8M897 520l7-9 6-10 7-11 7-10 6-11 7-10 7-10 7-9 6-8 7-6M216 748l14 4 14 4 14 5 14 4M393 733l8-11 8-13 9-13 8-13 8-13 8-13 9-11M666 622l8-9 8-10 7-11 7-12 8-12 7-12 8-11 7-11 8-9 7-8M903 515l7-9 7-10 6-10 7-11 7-11 7-10 6-10 7-9 7-8 6-6M218 744l14 4 15 4 14 5M396 729l9-12 8-12 8-13 9-14 8-13 8-12 9-12M664 625l8-7 7-10 8-10 7-11 8-12 7-12 8-12 7-11 8-11 7-10 8-8M903 518l6-8 7-9 7-10 7-10 7-11 6-11 7-11 7-10 7-9 7-7 6-7M221 740l14 3 14 5 15 4M391 736l9-11 9-12 8-13 8-13 9-13 8-14 8-12 9-12 9-11M669 621l8-8 8-9 7-11 8-11 7-12 8-12 7-12 8-11 7-11 8-10 8-8 8-7M902 520l7-7 7-8 7-9 6-10 7-11 7-11 7-10 7-11 7-10 7-9 6-8 7-6 7-5M223 736l15 3 14 5M386 741l9-9 9-11 9-12 8-13 8-13 9-14 8-13 9-13 8-12 9-10 9-9M666 623l8-6 8-8 8-10 8-10 7-11 8-12 8-12 7-13 8-11 7-11 8-10 8-8 8-7M902 521l7-6 6-6 7-8 7-9 7-11 7-10 7-11 7-11 7-11 7-10 6-9 7-8 7-6 7-5M226 732l15 4M359 757l11-4 10-7 10-7 9-10 9-11 9-12 8-13 9-13 8-14 9-13 8-13 9-12 9-11 9-9 9-8M664 624l8-4 8-7 8-8 8-9 8-11 7-11 8-12 7-12 8-12 8-12 7-11 8-10 8-8 8-7 8-5M908 517l7-5 7-7 7-8 7-9 7-10 7-11 7-11 7-11 6-11 7-10 7-9 7-8 7-7 7-4 6-3M230 730l14 4M340 759l12-1 11-3 11-4 10-6 10-8 10-10 9-11 8-12 9-13 8-13 9-14 8-14 9-13 9-12 9-11 9-9 9-7 10-6 10-3M661 625l8-3 9-5 8-6 8-8 8-10 7-10 8-12 8-12 7-12 8-12 8-12 8-11 7-10 8-8 8-7 8-5 8-4M908 518l7-4 7-5 6-7 7-8 7-9 7-10 7-11 7-11 7-12 7-10 7-11 7-9 7-8 7-6 7-5 6-3M292 748l14 4 13 4 13 2 13 1 12-1 11-3 11-4 10-7 10-8 9-9 9-11 9-12 9-14 8-13 9-14 8-14 9-13 9-12 9-11 9-9 10-7 10-6 10-4 10-1 10 0M648 625l10 1 8-2 9-3 8-5 9-6 8-8 8-10 7-10 8-12 8-12 8-12 7-13 8-12 8-11 8-10 8-8 8-7 7-5 8-3 8-2M907 518l7-2 7-3 7-6 7-6 7-8 7-10 7-10 7-11 7-11 7-11 7-11 7-10 7-10 7-8 7-6 7-5 6-3 7-1M238 731l15 4 15 5 14 5 15 5 14 4 13 3 13 3 13 0 12-1 11-2 11-5 10-6 10-8 9-10 10-11 8-12 9-13 9-14 8-14 9-14 9-13 8-12 9-11 10-9 9-8 10-5 10-4 11-2 10 1 11 2 10 3M635 621l10 3 9 2 10 0 8-1 9-3 9-5 8-7 8-8 8-9 8-11 7-11 8-13 8-12 8-13 7-11 8-12 8-10 8-8 8-7 8-5 8-3 8-2 8 1M900 518l7 1 7-1 7-2 7-3 7-6 7-6 7-8 7-10 7-10 7-11 7-11 7-12 7-11 7-10 7-9 7-8 7-7 7-4 6-3 7-2 6 0M243 735l15 4 15 5 15 5 14 4 14 4 13 4 14 2 12 1 12-1 11-3 11-4 11-7 10-8 9-10 9-11 9-12 9-13 8-14 9-14 9-14 8-13 9-13 10-10 9-10 10-7 9-6 11-4 10-1 10 0 11 2 11 3 10 5 11 5 10 5 11 5 10 5 10 4 9 4 10 1 9 1 9-2 8-3 9-5 8-6 8-8 8-10 8-11 8-11 8-13 7-12 8-13 8-12 8-11 8-10 8-8 8-7 8-5 8-4 8-1 8 0 8 2 8 4M906 519l7 2 7-1 7-2 7-4 7-5 7-7 7-8 7-9 8-11 7-11 7-11 7-11 7-11 7-11 7-9 7-8 7-6 7-5 6-3 7-2 6 1 6 1M249 741l15 4 15 4 14 5 15 5 14 4 13 3 13 2 13 1 12-1 11-3 11-4 11-7 10-8 9-10 9-11 9-12 9-13 9-14 8-14 9-14 9-14 9-12 9-11 9-9 10-8 10-5 10-4 10-2 11 0 10 2 11 4 11 4 10 5 11 5 10 6 10 5 10 4 10 3 9 2 9 0 9-2 9-3 8-5 9-6 8-8 8-10 8-11 7-11 8-13 8-12 8-13 8-12 8-11 8-10 8-9 8-7 8-5 8-3 8-2 8 1 8 2 7 3 8 4 8 6 8 5M884 507l7 5 8 5 7 3 7 3 7 1 7 0 7-2 7-4 7-5 7-7 7-9 7-9 7-10 7-11 8-12 7-11 7-11 7-10 7-10 7-8 7-6 6-5 7-3 7-2 6 1 6 1 6 4M256 748l15 4 14 5 15 5 14 4 14 4 14 4 13 2 13 0 11-1 12-2 11-5 10-6 10-9 10-9 9-12 9-12 9-14 8-13 9-15 9-13 9-14 9-12 9-11 9-10 10-7 10-6 10-4 10-1 11 0 10 2 11 3 11 4 10 5 10 6 11 5 10 5 10 4 9 3 10 2 9 0 9-1 8-4 9-5 8-6 8-8 8-10 8-11 8-12 8-12 8-13 8-12 8-12 8-11 8-10 8-9 8-7 8-5 8-4 8-1 8 0 8 2 7 3 8 5 8 5 7 5 8 6 7 5 7 5 8 4 7 2 7 1 7 0 7-2 7-4 7-5 7-7 7-8 7-10 7-10 7-11 7-12 7-11 8-11 7-11 7-9 7-8 7-7 6-4 7-4 6-1 7 0 6 2 6 3 5 5M1111 430l5 4M263 758l15 4 14 4 15 5 14 5 14 4 14 3 13 2 12 1 12-1 12-3 11-5 10-6 10-9 10-9 9-12 9-12 9-14 8-14 9-14 9-14 9-13 9-12 9-11 9-10 10-8 10-5 10-4 10-2 11 0 10 2 11 3 11 5 10 5 11 5 10 5 10 5 10 4 9 3 10 2 9 0 9-2 8-3 9-5 8-6 8-9 8-9 8-11 8-12 8-12 8-13 8-12 8-13 8-11 8-10 8-9 8-7 8-5 8-3 8-2 8 1 7 1 8 4 8 4 8 5 7 6 8 5 7 5 7 5 7 4 7 2 7 1 7 0 7-2 7-4 7-6 7-6 7-9 8-9 7-11 7-11 7-11 7-12 7-11 7-10 8-9 7-8 6-7 7-5 7-3 6-2 6 1 6 1 6 4 6 4 6 5 5 5 6 6 5 5 5 5 6 4M270 770l15 3 15 5 15 5 14 4 14 4 13 3 13 2 13 1 12-2 11-2 11-5 11-7 10-8 9-10 9-11 9-13 9-13 9-14 9-14 8-14 9-14 9-12 9-11 10-10 9-7 10-6 11-4 10-2 10 1 11 1 10 3 11 5 10 4 11 6 10 5 10 5 10 4 9 3 10 1 9 0 9-1 8-3 9-5 8-7 8-8 8-10 8-11 8-12 8-12 8-13 8-12 8-12 8-12 8-10 8-9 8-7 8-5 8-3 8-2 8 0 7 2 8 4 8 4 8 5 7 5 7 6 8 5 7 4 7 4 7 2 7 1 7 0 7-2 7-4 7-5 7-7 7-9 7-9 7-10 8-12 7-11 7-11 7-11 7-11 7-9 7-8 7-7 7-5 6-3 7-2 6 1 6 1 6 4 6 4 5 5 6 5 5 6 5 5 6 5 5 4M279 783l14 4 15 4 15 4 14 5 14 4 13 3 13 2 13 0 12-1 11-3 11-5 10-7 10-8 10-10 9-11 9-13 9-13 9-14 8-14 9-14 9-14 9-12 9-11 10-10 9-7 10-6 10-4 10-2 11 0 10 2 11 3 10 4 11 5 10 5 10 5 10 5 10 4 10 3 9 1 9 0 9-1 8-4 9-5 8-6 8-9 8-9 8-11 8-12 8-12 8-13 8-13 8-12 8-11 8-10 8-9 8-7 8-5 8-4 8-1 8 0 7 2 8 3 8 4 7 5 8 5 7 6 8 5 7 4 7 4 7 2 7 1 7 0 7-3 7-3 7-6 7-7 7-8 7-10 7-10 7-11 7-11 7-12 8-11 7-10 7-10 7-8 7-7 6-5 7-3 6-1 7 0 6 2 5 3 6 4 6 5 5 5 5 6 6 5 5 5 5 4M287 797l15 4 15 4 14 5 14 4 14 4 13 2 13 2 13 1 12-2 11-3 11-5 10-6 10-9 10-9 9-12 9-12 9-14 8-14 9-14 9-14 9-13 9-13 9-11 9-9 10-8 10-6 10-4 10-2 11 0 10 2 11 3 10 4 10 4 11 5 10 5 10 5 9 4 10 3 9 1 9 0 9-1 9-4 8-5 8-7 9-8 8-10 8-10 7-12 8-13 8-12 8-13 8-12 8-11 8-10 8-9 8-7 8-6 8-3 8-2 8 0 8 2 7 3 8 4 7 5 8 5 7 6 7 5 7 4 7 4 7 2 7 1 7-1 7-2 7-4 7-5 7-7 7-8 7-10 7-10 8-12 7-11 7-11 7-11 7-11 7-9 7-8 7-7 7-5 7-3 6-2 6 0 6 2 6 3 6 4 5 5 5 5 6 6 5 5 5 5 6 4M296 813l15 3 14 4 15 4 14 5 13 3 14 3 13 2 12 0 12-1 11-4 11-4 10-7 10-8 10-10 9-12 9-12 9-14 9-14 8-14 9-14 9-13 9-13 9-11 10-9 9-8 10-6 10-4 10-2 11 0 10 1 10 3 11 4 10 5 10 5 10 5 10 4 10 4 9 3 10 1 9 0 8-2 9-3 8-5 9-7 8-8 8-10 8-11 8-12 8-12 7-13 8-12 8-12 8-12 8-10 8-9 8-7 8-5 8-4 8-1 8 0 8 1 7 3 8 4 7 5 8 5 7 6 7 5 7 4 7 3 7 3 7 0 7 0 7-2 7-4 7-6 7-7 7-8 7-10 7-10 7-11 7-12 8-11 7-11 7-11 7-9 7-8 7-7 6-5 7-3 6-2 6 0 6 2 6 3 6 4 5 5 6 5 5 5 5 6 5 4 6 4M305 829l14 3 15 4 14 4 14 4 14 3 13 3 13 2 12 0 12-2 11-3 11-5 10-6 10-9 10-10 9-11 9-13 9-13 9-14 8-14 9-14 9-14 9-12 9-11 10-10 9-8 10-6 10-4 10-2 11 0 10 1 10 3 11 4 10 5 10 4 10 5 10 5 9 3 10 3 9 1 9 0 9-2 8-3 9-5 8-7 8-8 8-10 8-11 8-12 8-12 8-13 8-12 7-13 8-11 8-10 8-9 8-7 8-5 8-4 8-2 8 0 8 2 7 3 8 4 7 5 8 5 7 5 7 5 7 4 7 3 7 2 7 1 7 0 6-3 7-4 7-5 7-7 7-8 7-10 7-10 8-12 7-11 7-11 7-11 7-11 7-9 7-8 7-7 7-5 6-3 7-2 6 0 6 1 6 3 5 4 6 5 5 5 5 6 5 5 5 4 6 4M314 844l14 4 15 3 14 4 14 4 13 4 14 2 12 2 13 0 11-2 12-3 10-5 11-7 10-8 9-10 9-12 9-12 9-14 9-14 9-14 8-14 9-13 9-13 9-11 10-9 9-8 10-6 10-4 10-2 10-1 11 2 10 2 10 4 11 4 10 5 10 5 9 4 10 4 9 2 9 1 9 0 9-2 9-3 8-5 8-7 8-8 8-10 8-11 8-12 8-12 8-13 8-12 8-13 8-11 8-10 8-9 8-7 7-5 8-4 8-2 8 0 8 2 7 2 8 4 7 5 7 5 8 5 7 5 7 4 7 3 6 2 7 1 7-1 7-2 7-4 7-5 7-7 7-9 7-9 7-11 7-11 7-11 8-12 7-11 7-10 7-9 7-9 7-6 6-5 7-4 6-1 6 0 6 1 6 3 5 4 6 4 5 6 5 5 5 5 6 4 5 4M323 860l14 3 14 4 15 4 13 3 14 4 13 2 13 1 12 0 12-1 11-4 11-5 10-7 10-8 9-10 9-11 9-13 9-13 9-14 9-15 8-13 9-14 9-12 10-11 9-10 9-8 10-6 10-4 10-2 10-1 11 2 10 2 10 4 10 4 10 5 10 4 10 4 9 4 10 2 9 1 9 0 8-2 9-3 8-5 8-7 8-9 8-9 8-11 8-12 8-13 8-12 8-13 8-12 8-11 8-10 8-9 8-7 8-6 8-3 7-2 8 0 8 1 7 3 8 4 7 4 7 5 7 5 7 5 7 4 7 3 7 2 7 1 7-1 7-2 6-4 7-6 7-7 7-8 7-10 7-10 8-11 7-12 7-11 7-11 7-11 7-9 7-8 7-7 7-5 6-3 7-2 6 0 6 1 5 3 6 4 5 4 5 5 5 6 6 5 5 4 5 4M331 875l15 3 14 3 14 4 14 4 13 3 13 2 13 1 12 0 12-2 11-3 11-5 10-7 10-8 9-10 9-12 9-12 9-14 9-14 9-14 8-14 9-13 9-13 10-11 9-10 9-8 10-6 10-4 10-2 10 0 10 1 11 2 10 4 10 4 10 4 10 5 9 4 10 3 9 3M773 733l9-7 8-9 8-9 8-11 8-12 7-12 8-13 8-13 8-12 8-11 8-10 8-9 8-7 8-6 8-4 7-1 8-1 8 2 7 2 8 4 7 5 7 5 7 4 7 5 7 4 7 3 7 2M1028 595l7-10 7-10 7-12 7-11 8-11 7-11 7-11 7-9 7-8 7-7 6-5 7-4 6-1 6-1 6 2 6 3 5 3 5 5 6 5 5 5 5 5 5 4 5 4M340 889l14 2 14 4 14 3 14 4 13 3 13 2 13 1 12 0 12-2 11-3 10-5 11-7 9-9 10-10 9-11 9-13 9-13 9-14 9-14 8-14 9-14 9-12 9-11 10-10 9-8 10-6 10-4 10-3 10 0 10 1 10 2 10 4 10 4 10 4 10 5 10 4M789 737l8-9 8-9 8-11 8-12 8-12 8-13 7-13 8-12 8-11 8-10 8-9 8-7 8-6 8-4 8-2 7 0 8 2 7 2 8 4 7 4 7 5 7 5 7 4M1042 595l7-10 7-12 7-11 7-11 7-11 8-11 7-9 7-9 6-6 7-5 6-4 7-2 6 0 6 2 5 2 6 4 5 4 5 5 5 5 5 5M348 901l14 3 14 3 14 4 14 3 13 3 13 2 13 1 12 0 11-2 11-4 11-5 10-7 10-8 10-11 9-11 9-13 9-13 8-14 9-14 9-14 9-14 9-12 9-11 9-10 10-8 10-6 10-4 10-3 10 0 10 1 10 2 10 3 10 4 10 5M804 738l8-9 8-11 8-12 8-13 8-12 8-13 8-12 8-11 7-10 8-9 8-8 8-5 8-4 8-2 7 0 8 1 7 3 8 3 7 5 7 4 7 5M1055 593l8-11 7-11 7-12 7-11 7-10 7-10 7-8 7-7 7-5 6-3 6-2 6 0 6 1 6 3 5 3 5 5 6 5M355 912l14 2 15 4 14 3 13 3M474 928l11-4 10-5 11-7 9-8 10-11 9-11 9-13 9-13 9-14 9-14 8-14 9-14 9-12 10-12 9-9 9-9 10-6 10-4 10-2 10-1 10 1 10 2 10 3 10 4M811 747l8-10 8-11 8-12 8-12 8-13 8-12 8-13 8-11 8-10 8-9 8-7 7-6 8-4 8-2 8 0 7 1 8 3 7 3 7 5 7 4M1062 601l7-11 8-12 7-11 7-11 7-11 7-9 7-9 7-6 7-6 6-3 6-2 6 0 6 1 6 3 5 3 5 5M362 921l15 2 14 4 14 3M492 933l10-6 11-7 9-8 10-10 9-12 9-13 9-13 9-14 9-14 9-14 9-14 9-12 9-12 9-10 10-8 10-6 9-4 10-3 10 0 10 0 11 3 10 3M818 754l8-10 8-11 8-12 8-12 8-13 8-13 8-12 8-11 8-10 8-9 8-8 8-5 8-4 7-2 8-1 7 2 8 2 7 4M1076 595l8-11 7-11 7-12 7-10 7-10 7-8 7-7 7-5 6-3 6-2 6-1 6 2 6 2M369 928l14 3 14 3M498 939l11-5 10-7 10-9 10-10 9-11 9-13 9-14 9-14 9-14 9-14 9-14 9-12 9-12 9-10 10-8 10-6 10-4 10-3 10-1 10 1 10 2M833 749l8-11 8-12 8-12 8-13 8-13 8-12 8-11 8-11 8-9 8-7 8-6 8-3 8-3 7 0 8 1 7 3M1084 600l7-12 7-11 7-11 8-11 7-10 7-8 6-7 7-5 7-4 6-1 6-1 5 2M375 933l15 3 14 3M516 939l10-7 10-9 9-10 10-12 9-13 9-13 9-14 9-15 8-14 10-13 9-13 9-12 9-9 10-9 10-6 10-4 10-3 10-1 10 1M840 753l8-11 8-12 8-13 8-13 9-12 8-13 8-11 8-10 8-9 8-8 7-6 8-4 8-2 8 0 7 1M1091 602l7-11 8-12 7-11 7-11 7-9 7-8 7-7 7-6 6-3 6-2 6 0M381 937l14 2M522 942l10-7 10-9 10-10 9-12 9-13 9-13 9-15 9-14 9-14 9-14 9-13 10-11 9-10 10-8 10-7 10-4 10-3 10-1M839 765l8-10 9-11 8-13 8-12 8-13 8-13 8-12 8-12 8-10 8-9 8-8 8-5 8-4 8-2M1099 603l7-11 7-12 8-11 7-11 7-9 7-9 7-7 6-5 7-4 6-2M387 939l14 2 14 3 14 3 14 3 13 3M528 944l10-7 10-9 10-11 9-12 9-12 9-14 10-15 9-14 9-14 9-14 9-13 9-12 10-10 10-8 9-6 10-5 10-2M846 765l9-10 8-11 8-12 8-13 8-13 8-13 8-12 9-12 8-10 8-9 8-8 8-6 8-4 7-2M1099 614l7-11 8-12 7-12 7-11 8-11 7-9 7-9 7-7 7-5 6-4 6-1M392 939l14 2 14 3 15 3 13 4 14 2 13 2M544 937l10-9 10-11 9-12 9-13 10-14 9-14 9-15 9-14 9-14 9-13 10-12 10-10 9-8 10-7 10-4M854 764l8-10 8-11 8-13 8-12 9-13 8-13 8-13 8-12 8-10 8-9 9-8 7-6 8-4M1107 612l7-11 8-12 7-12 8-11 7-11 7-9 7-9 7-7 7-5 6-4M397 937l14 3 14 3 15 3 13 4 14 2M539 943l11-7 10-9 10-11 9-12 9-13 10-14 9-15 9-15 9-14 10-14 9-13 9-12 10-10 10-9 10-6M861 762l8-11 8-11 9-12 8-13 8-13 8-13 9-13 8-12 8-10 8-9 8-8 8-6 8-4M1108 620l7-11 8-11 7-12 8-12 7-11 7-11 8-10 7-8 7-7 6-6 7-4M401 935l15 3 14 3 15 3 14 3 13 3M545 941l10-8 10-9 10-10 10-12 9-14 10-14 9-15 9-14 10-15 9-14 9-13 10-12 10-10 10-9 10-7M860 767l8-9 9-10 8-11 8-13 9-13 8-13 8-13 9-13 8-11 8-11 8-10 8-7 9-6M1116 616l7-11 8-11 8-12 7-12 8-12 7-10 7-10 8-9 6-7 7-5M406 932l15 3 14 3 15 3 14 4M550 938l11-7 10-9 10-11 10-12 9-14 10-14 9-15 10-15 9-15 9-14 10-13 10-12 9-11 10-8M859 771l8-7 9-9 8-11 9-11 8-13 8-13 9-13 8-13 8-13 9-12 8-11 8-9 9-8 8-6M1117 622l8-10 7-11 8-12 7-12 8-12 7-12 8-10 7-10 7-9 7-7 7-6M411 929l14 2 15 4 14 3 15 4M556 935l11-7 10-10 10-11 10-12 9-13 10-15 9-15 10-15 9-15 10-14 9-14 10-12 10-10 10-9 10-6M866 767l9-8 8-9 9-10 8-12 9-12 8-13 9-14 8-13 9-13 8-12 8-11 9-9 8-8 8-6M1118 626l8-9 7-10 8-11 7-12 8-12 8-12 7-12 8-11 7-10 8-8 7-8 6-5M416 926l14 2 15 4 15 3M550 938l12-6 10-7 11-10 10-11 10-12 10-14 9-14 10-15 9-16 10-15 9-14 10-14 10-12 10-10 10-9 10-7M865 769l9-6 9-7 8-10 9-10 8-12 9-12 8-14 9-13 8-14 9-13 8-12 9-11 8-9 8-8 9-6M1120 629l7-8 7-9 8-10 8-11 7-12 8-12 8-12 7-12 8-11 7-10 8-9 7-7 7-5M421 923l14 3 15 3M545 940l11-4 12-6 10-8 11-9 10-11 10-13 10-14 10-14 9-15 10-16 10-15 9-15 10-13 10-13 10-10 10-9 10-7M864 769l9-4 9-6 8-7 9-9 9-11 8-12 9-12 8-14 9-13 9-14 8-13 9-12 8-11 9-10 8-8 8-6 8-4M1121 631l8-6 7-8 7-9 8-10 7-11 8-12 8-12 8-13 8-11 7-12 8-10 7-9 7-7 7-5 6-4M426 921l15 3M538 940l13-2 11-4 12-6 11-7 10-10 11-11 10-13 10-14 9-14 10-16 10-15 10-16 9-14 10-14 10-13 10-10 11-9 10-7 10-5M872 767l9-4 9-6 8-8 9-9 9-11 8-12 9-12 9-14 8-14 9-13 9-14 8-12 9-11 8-10 9-8 8-6 8-4 8-2M1123 632l7-4 7-6 8-8 7-9 8-10 7-12 8-12 8-12 8-12 8-12 7-12 8-10 7-9 7-7 7-6 7-3 6-2M432 921l15 3M505 937l14 3 13 1 13-1 12-2 12-4 11-6 11-8 11-9 10-12 11-12 9-14 10-15 10-16 10-15 10-16 10-15 10-14 10-12 10-11 10-9 11-7 10-4 10-3M871 767l9-2 9-4 9-6 8-7 9-10 9-10 9-12 8-13 9-14 9-14 8-14 9-13 9-12 8-11 9-10 8-8 9-6 8-4 8-2M1125 633l7-3 7-5 7-6 7-7 8-9 7-11 8-11 8-12 8-13 8-12 8-12 8-11 7-11 8-9 7-7 7-6 6-3 6-2M438 922l15 3 15 3 15 4 15 4 14 3 13 2 14 1 12-1 13-2 12-4 11-6 11-8 11-9 10-12 11-12 10-14 10-15 9-16 10-16 10-16 10-15 10-13 10-13 11-11 10-9 10-7 11-5 10-2 11-1 10 1M861 767l9 1 9-1 9-2 9-4 9-6 9-7 8-10 9-11 9-12 9-13 8-13 9-14 9-14 9-14 8-12 9-11 9-10 8-8 9-6 8-4 8-3 7 0M1127 633l7-1 6-3 7-4 8-6 7-8 8-9 7-11 8-11 8-12 8-13 8-12 8-12 8-12 7-10 8-9 7-8 7-5 6-4 7-2M445 925l15 3 15 4 15 3 15 4 14 3 13 2 14 1 13 0 12-3 12-4 11-6 12-8 10-9 11-12 10-13 10-14 10-15 10-16 10-16 10-15 10-15 10-14 10-13 11-11 10-9 11-7 10-5 11-2 10-1 11 1 10 3 10 3M851 763l9 3 9 3 9 1 10-1 8-2 9-4 9-6 9-8 9-9 8-11 9-12 9-13 9-14 9-14 9-14 8-14 9-12 9-11 9-10 8-8 8-7 8-4 8-2 8 0 8 1M1129 633l6 1 7-1 7-3 7-5 7-6 8-7 7-10 8-10 8-12 8-12 8-12 8-13 8-12 7-12 8-10 8-9 7-7 7-6 6-4 7-2 5 0M452 931l15 3 16 3 14 4 15 3 14 3 14 3 13 0 13 0 13-2 11-5 12-6 11-8 11-9 11-12 10-13 10-14 10-15 10-16 10-16 10-16 10-15 10-14 11-13 10-11 10-9 11-7 10-5 11-3 10 0 11 1 10 2 11 4 10 4 10 5 9 5 10 4 9 4 10 2 9 1 9 0 9-2 9-5 8-6 9-7 9-10 9-11 9-12 8-13 9-14 9-14 9-14 9-14 9-12 9-12 8-10 9-8 8-6 8-4 8-2 8 0 7 1 8 3M1131 633l6 3 7 0 6-1 7-2 7-5 8-6 7-8 8-9 7-11 8-11 8-13 8-12 8-13 8-12 8-12 8-10 7-9 8-7 7-6 6-4 6-2 6 0 6 2M460 939l15 2 16 4 14 3 15 4 14 3 14 2 13 1 13-1 12-2 12-4 12-7 11-8 11-9 11-12 10-13 10-14 10-16 10-16 10-16 10-15 11-16 10-14 10-13 10-11 11-9 10-7 11-5 11-3 10 0 10 1 11 2 10 4 10 4 10 5 10 5 9 4 10 4 9 2 9 1 9-1 9-2 9-4 9-6 8-8 9-9 9-11 9-13 9-13 9-14 9-14 9-14 9-14 8-12 9-12 9-10 8-8 9-6 8-4 8-2 8-1 7 2 7 3 7 4 7 5M1126 630l6 5 7 3 6 2 7 1 7-1 7-3 7-5 7-6 7-8 8-9 8-11 8-11 8-12 8-13 8-13 8-12 8-12 7-10 8-9 7-8 7-5 7-4 6-2 6 0 5 1 6 3M469 949l15 2 15 4 15 3 14 4 15 2 13 2 14 1 12-1 13-2 12-4 11-6 12-8 10-10 11-12 10-13 11-14 10-16 10-16 10-16 10-16 10-15 10-14 11-13 10-11 11-10 10-7 11-5 10-2 11-1 10 1 10 2 11 4 10 4 10 5 9 5 10 4 9 3 9 3 9 1 9-1 9-2 9-5 9-6 9-7 9-10 8-11 9-12 9-14 9-14 9-14 9-14 9-13 9-13 9-12 9-10 8-8 8-6 9-4 7-3 8 0 8 1 7 3 7 4 7 5 6 5 7 6 6 5 7 4 6 3 7 2 6 1 7-1 7-3 7-4 7-7 8-7 7-10 8-10 8-12 8-12 8-13 8-13 8-12 8-12 8-10 7-9 8-8 6-6 7-3 6-2 6 0 6 1 5 3 5 4M478 961l15 2 15 3 15 4 14 3 14 3 14 2 13 1 13-1 12-3 12-4 12-6 11-8 11-10 11-12 10-13 10-15 10-15 11-16 10-16 10-16 10-15 10-15 11-13 10-11 11-9 10-7 11-5 10-3 11-1 10 1 10 2 10 4 10 4 10 5 10 4 9 5 10 3 9 2 9 1 9 0 9-3 8-4 9-6 9-8 9-10 9-11 9-12 9-13 9-14 9-15 9-14 9-13 8-13 9-12 9-10 9-8 8-6 8-5 8-2 8 0 7 1 7 3 7 4 7 5 6 5 7 5 6 5 7 4 6 4 7 2 6 0 7-1 7-3 7-4 7-7 7-8 8-9 8-11 8-11 8-13 8-12 8-13 8-12 8-12 8-10 7-10 8-7 7-6 6-4 6-2 6 0 6 2 5 2 5 5M1353 534l4 4M487 975l15 2 15 3 15 4 14 3 14 3 14 1 13 1 13-1 12-3 12-4 12-6 11-9 11-10 11-11 10-13 10-15 10-15 11-16 10-17 10-15 10-16 10-14 11-13 10-11 11-10 10-7 11-5 10-3 11-1 10 1 10 2 10 4 10 4 10 5 9 4 10 4 9 3 9 3 9 0 9 0 9-3 9-4 9-6 8-8 9-10 9-11 9-12 9-14 9-14 9-14 9-14 9-14 9-13 9-11 8-10 9-8 8-7 8-4 8-2 8-1 7 1 7 3 7 4 7 5 7 5 6 5 6 5 7 4 6 3 6 2 7 1 7-1 6-3 8-5 7-6 7-8 8-9 8-11 8-12 8-12 8-13 8-13 8-12 8-12 8-10 7-9 7-8 7-6 7-4 6-2 6 0 5 2 5 2 5 5 5 4 4 6 4 5 5 5 4 5 4 4M497 991l15 2 15 3 15 3 14 3 14 3 13 1 14 1 12-1 13-3 11-5 12-6 11-8 11-10 11-12 10-13 10-15 11-15 10-16 10-16 10-16 10-16 11-14 10-13 10-11 11-10 10-7 11-5 10-3 11-1 10 1 10 2 10 3 10 4 10 5 9 4 9 4 10 3 9 2 9 1 8-1 9-2 9-5 9-6 9-8 8-9 9-12 9-12 9-13 9-14 9-15 9-14 9-13 9-13 9-12 9-10 8-8 9-7 8-4 8-2 7-1 7 1 8 3 6 4 7 4 6 6 7 5 6 4 6 5 7 3 6 2 7 0 6-1 7-3 7-5 7-6 8-8 7-10 8-10 8-12 8-12 8-13 9-13 8-12 8-12 7-10 8-9 7-8 7-6 6-4 7-2 5 0 6 1 5 3 5 4 4 5 4 5 5 5 4 6 4 4 5 4M507 1008l15 2 15 3 14 3 15 3 14 2 13 1 13 1 13-1 12-3 12-5 11-6 11-9 11-10 11-12 10-13 11-14 10-16 10-16 10-16 10-16 11-15 10-15 10-13 11-11 10-9 10-8 11-5 10-3 11-1 10 0 10 3 10 3 10 4 9 4 10 4 9 4 9 3 9 2 9 1 9-1 9-3 8-4 9-6 9-8 9-10 9-11 8-13 9-13 9-14 9-14 10-14 9-14 8-13 9-11 9-11 9-8 8-6 8-5 8-2 7-1 7 1 8 3 6 4 7 4 6 5 7 5 6 5 6 4 6 3 7 2 6 0 7-1 7-3 7-5 7-6 7-8 8-10 8-10 8-12 8-12 8-13 8-13 8-12 8-12 8-10 7-10 7-7 7-6 7-4 6-2 6-1 5 2 5 3 5 3 4 5 5 5 4 6 4 5 4 4 5 4M517 1026l15 2 15 2 14 3 15 3 13 2 14 1 13 1 12-2 12-3 12-4 12-7 11-8 11-10 10-12 11-14 10-14 10-15 10-16 10-17 11-16 10-15 10-14 10-13 11-12 10-9 11-8 10-5 10-3 11-1 10 0 10 2 10 3 9 4 10 4 9 4 10 4 9 3 9 2 8 1 9-1 9-3 9-5 8-6 9-8 9-10 9-11 9-12 9-14 9-14 9-14 9-14 9-14 9-13 8-11 9-10 9-9 8-6 8-5 8-2 7-1 7 1 7 3 7 3 7 5 6 5 6 5 6 4 7 4 6 3 6 2 7 0 6-1 7-3 7-5 7-6 7-8 8-10 8-11 8-11 8-13 8-12 8-13 8-12 8-12 8-11 8-9 7-8 7-5 6-4 6-3 6 0 5 1 5 3 5 4 4 4 5 5 4 6 4 5 4 4 4 4M528 1044l15 2 14 2 15 3 14 3 13 2 14 1 12 0 13-2 12-3 12-4 11-7 11-8 11-11 11-12 10-13 10-14 10-16 11-16 10-16 10-16 10-15 10-15 11-13 10-11 11-10 10-7 10-5 11-4 10-1 10 0 10 2 10 3 9 4 10 4 9 4 9 4 9 2 9 2 9 1 8-2 9-2 9-5 9-6 8-8 9-10 9-11 9-13 9-13 9-14 9-14 9-14 9-14 9-13 9-11 8-11 9-8 8-7 8-4 8-3 7 0 7 1 7 2 7 3 6 5 7 5 6 4 6 5 6 4 6 3 7 1 6 0 6-1 7-3 7-5 7-6 8-8 7-10 8-11 8-11 8-13 8-12 8-13 9-12 7-12 8-11 8-9 7-7 7-6 6-5 6-2 6 0 5 1 5 3 5 3 4 5 4 5 5 5 4 5 4 4 4 4M538 1063l15 1 14 3 15 2 14 2 13 2 13 1 13 0 13-1 12-4 11-5 12-6 11-9 10-10 11-12 10-13 11-15 10-15 10-16 10-16 10-16 11-16 10-14 10-13 10-11 11-10 10-7 11-6 10-3 10-2 10 1 10 1 9 3 10 4 9 4 10 3 9 4 9 3 8 1 9 1 9-2 8-2 9-5 9-7 8-8 9-9 9-12 9-12 9-13 9-14 9-15 9-14 9-13 9-13 9-12 8-10 9-8 8-7 8-5 8-2 7-1 7 1 7 2 7 4 6 4 6 4 7 5 6 4 6 4 6 3 6 2 6 0 7-2 6-3 7-5 8-6 7-8 8-10 7-10 8-12 8-12 9-13 8-13 8-12 8-12 7-10 8-10 7-7 7-6 6-5 6-2 6 0 5 1 5 2 5 4 4 4 4 5 4 5 4 5 4 5 5 3M549 1081l14 1 14 2 15 3 13 2 14 1 13 1 13 0 12-2 12-3 12-5 11-7 11-8 11-11 10-11 11-14 10-14 10-16 10-16 10-16 11-16 10-15 10-15 10-13 11-11 10-10 10-7 11-6 10-3 10-2 10 0 10 2 9 3 10 3 9 4 9 4 9 3 9 3 9 1 8 0 9-1 9-3 8-5 9-6 9-8 8-10 9-11 9-13 9-13 9-14 9-14 9-14 9-14 9-13 9-11 9-11 8-8 8-7 8-4 8-3 7-1 7 1 7 2 7 3 6 4 6 5 6 5 6 4 6 3 6 3 6 2 7 0 6-2 7-3 7-5 7-6 7-8 8-10 8-11 8-11 8-13 8-12 8-13 8-12 8-12 8-11 7-9 7-8 7-6 7-4 6-2 5-1 5 1 5 3 5 3 4 5 4 4 4 5 4 5 4 5 4 3M559 1098l14 1 14 2 14 2 14 2 14 2 13 1 12-1 13-2 11-3 12-5 11-7 11-9 11-10 10-12 11-13 10-15 10-15 11-16 10-16 10-16 10-16 10-14 11-13 10-12 10-9 11-8 10-5 10-4 10-2 10 0 10 2 9 2 10 4 9 3 9 4 9 3 9 3 8 1 9 0 8-1 9-3 9-5 8-6 9-9 9-9 8-12 9-12 9-13 9-14 9-15 9-14 9-13 9-13 9-12 9-10 8-9 8-6 8-5 8-3 7-1 7 1 7 2 7 3 6 4 6 5 6 4 6 4 6 4 6 3 6 1 6 0 7-2 6-3 7-5 7-6 8-8 7-10 8-11 8-11 8-13 8-12 8-13 8-12 8-12 8-11 8-9 7-8 7-6 6-4 6-2 6-1 5 1 4 2 5 4 4 4 4 5 4 5 4 5 4 4 4 3M569 1114l14 1 14 2 14 2 14 2 13 1 13 1 13-1 12-2 12-3 11-5 12-7 10-9 11-10 11-12 10-14 10-14 11-16 10-16 10-16 10-16 10-15 11-15 10-13 10-11 11-10 10-8 10-5 10-4 10-2 10 0 10 2 9 2 9 3 10 4 9 3 8 3 9 3 9 1 8 0 9-1 8-3 9-5 9-7 8-8 9-10 9-11 9-12 9-14 9-14 9-14 9-14 9-14 9-13 9-11 8-11 9-8 8-7 8-5 7-2 8-1 6 0 7 2 7 3 6 4 6 5 6 4 6 4 6 4 6 2 6 1 6 0 6-1 7-4 7-5 7-6 7-8 8-10 8-11 8-11 8-13 8-12 8-13 8-12 8-12 8-11 7-9 7-8 7-6 7-4 6-2 5-1 5 1 5 2 4 3 5 5 4 4 3 5 4 5M578 1129l15 1 14 2 14 1 13 2 14 1 12 1 13-1 12-2 12-4 11-5 12-7 11-9 10-10 11-12 10-13 10-15 11-15 10-16 10-17 10-16 11-15 10-14 10-14 11-11 10-10 10-8 10-5 10-4 10-2 10 0 10 1 9 2 9 4 9 3 9 3 9 3 9 3 8 1 9 0 8-2 9-3 8-5 9-6 9-9 8-9 9-12 9-12 9-14 9-14 9-14 9-14 9-14 9-13 9-11 9-10 8-9 8-7 8-5 8-3 7-1 7 1 7 2 6 3 6 4 6 4 6 4 6 4 6 4 6 2 6 2M1257 769l7-5 7-6 7-8 8-10 7-11 8-11 9-13 8-13 8-12 8-13 8-11 8-11 7-9 7-8 7-6 6-4 6-3 6-1 5 1 5 3 4 3 4 4M588 1142l14 1 14 1 14 2 14 2 13 1 13 0 12-1 12-2 12-3 11-6 12-7 11-9 10-10 11-12 10-14 11-14 10-16 10-16 10-16 11-16 10-16 10-14 11-13 10-12 10-10 10-8 11-5 10-4 9-2 10 0 10 1 9 2 9 3 9 4 9 3 9 3 9 2 8 1 9 0 8-2 8-3 9-5 9-6 8-9 9-10 9-11 9-12 9-14 9-14 9-14 9-14 9-14 9-13 9-12 9-10 8-9 8-6 8-5 7-3 8-1 7 0 6 2 6 3 7 4 6 4 5 4M1286 758l8-9 8-11 8-12 8-12 8-13 8-13 8-12 8-12 8-11 7-9 8-8 6-6 7-4 6-3 5-1 5 1 5 2M597 1154l14 0 14 1 14 2 14 2 13 1 13 0 12-1 12-2 12-4 11-5 12-8 10-9 11-10 11-12 10-14 11-14 10-16 10-16 10-16 11-16 10-16 10-14 11-14 10-11 10-10 11-8 10-6 10-4 10-2 9 0 10 1 9 2 9 3 9 3 9 4 9 2M1047 934l9-8 9-10 9-12 9-12 9-14 9-14 9-14 9-14 9-14 9-13 9-12 9-10 8-9 8-7 8-5 7-3 8-1 7 1 6 2 6 3 6 3M1302 755l8-10 8-12 8-13 8-12 9-13 8-13 8-11 8-11 7-9 7-8 7-6 6-5 6-2 6-1 5 1 4 2M606 1163l14 1 14 1 14 1 14 2 13 1 12 0 13-1 12-3 12-3 11-6 11-7 11-9 11-11 11-12 10-13 11-15 10-16 10-16 11-16 10-17 10-15 11-15 10-13 11-12 10-10 10-8 10-6 10-4 10-2 10 0 9 1 10 2 9 3 9 3M1065 932l9-10 9-11 9-13 9-13 9-15 9-14 9-14 9-14 9-13 9-12 9-10 8-9 9-7 7-5 8-3 7-1 7 0 6 2 7 3M1319 750l8-12 8-13 8-12 9-13 8-13 8-11 8-11 7-10 7-8 7-6 6-4 6-3 6-1 5 1M615 1171l14 0 14 1 14 2 13 1 13 1 13 0 13-1 12-3 12-4 11-5 11-7 11-9 11-11 11-12 10-14 11-15 10-16 10-16 11-16 10-17 11-15 10-15 11-13 10-12 10-10 11-8 10-6 10-4 10-2 9-1 10 1 9 3 9 2M1074 937l9-10 9-12 9-12 9-14 9-14 10-15 9-14 9-14 9-13 9-12 9-10 8-9 8-7 8-5 8-3 7-1 6 0M1336 741l9-12 8-13 8-13 8-13 8-11 8-11 8-10 7-8 7-6 6-4 6-3 5-1 5 1M624 1176l14 1 14 1 13 1 14 1 13 1M705 1181l12-1 12-2 12-4 12-6 11-7 11-9 11-11 11-13 10-13 11-15 10-16 11-17 10-16 11-16 10-16 11-15 10-14 11-11 10-11 10-8 10-6 10-4 10-2 10 0 9 1M1093 930l8-12 10-12 9-14 9-14 9-15 10-14 9-14 9-13 9-12 9-11 8-9 8-7 8-5 8-3 7-1 7 0M1346 743l8-13 9-13 8-13 8-12 8-12 8-11 8-9 7-8 7-7 6-4 6-3 5-1M632 1180l14 0 14 1 14 2M726 1184l12-3 12-4 11-6 12-7 11-9 11-11 10-13 11-13 11-15 10-16 11-17 10-17 11-16 11-16 10-15 11-13 10-12 11-11 10-8 10-6 10-4 10-2M1093 941l9-10 9-11 10-13 9-14 9-14 9-15 10-15 9-14 9-13 9-12 9-11 9-8 8-7 8-5 7-4 7-1M1356 743l9-13 8-13 9-13 8-12 8-12 8-11 8-10 7-8 7-6 6-5 6-2 5-1M640 1182l15 1M747 1183l12-4 11-6 12-7 11-9 11-11 10-13 11-14 11-15 11-16 10-17 11-17 11-16 10-16 11-15 11-14 10-12 11-10 10-9 10-6 11-4 9-2M1104 941l9-10 9-12 9-13 9-13 10-15 9-15 9-14 10-14 9-14 9-12 9-11 8-9 9-7 8-5 7-3 7-1M1367 742l8-13 9-13 8-13 9-13 8-12 8-11 8-10 7-8 7-6 6-5 6-2M649 1183l14 1 14 1 14 1 14 1 13 1M756 1184l11-4 12-6 11-7 12-10 11-11 11-12 10-15 11-15 11-16 11-17 11-17 10-17 11-16 11-15 11-14 10-12 11-11 10-8 11-6 10-4 10-2M1114 940l9-10 9-12 9-13 10-14 9-15 10-14 9-15 10-15 9-13 9-12 9-11 9-9 8-7 8-5 7-3M1370 751l8-12 9-13 8-13 9-13 8-13 8-12 8-11 8-10 7-8 7-6 7-5 5-3M657 1183l14 1 15 1 14 1 13 1 14 1M752 1187l12-3 12-4 12-6 12-7 11-10 11-11 11-13 11-14 11-16 11-16 11-17 10-17 11-17 11-17 11-15 11-14 11-12 10-11 11-8 10-6 10-4M1116 947l9-9 9-10 9-12 9-13 10-15 9-14 10-15 10-15 9-15 9-13 10-13 9-10 8-10 9-7 7-5 8-3M1381 748l9-12 8-13 9-14 8-13 9-13 8-12 8-11 8-10 7-8 7-7 7-4 5-3M666 1183l14 0 14 1 14 1 14 2M761 1186l12-2 12-5 12-6 12-7 11-10 11-11 11-13 11-15 11-15 11-17 11-17 11-17 12-17 11-17 11-15 10-15 11-12 11-11 11-8 10-6 10-4M1127 944l9-9 9-10 9-12 9-14 10-14 10-15 9-15 10-15 10-14 9-14 9-13 9-11 9-9 9-7 7-5 8-3M1385 755l8-11 8-12 9-14 9-13 8-13 9-13 8-13 9-11 7-10 8-8 6-7 7-4 6-3M674 1182l15 0 14 1 14 2M757 1187l13-2 13-2 12-4 11-6 12-8 12-10 11-11 11-13 11-15 11-16 11-17 12-17 11-17 11-18 11-16 11-16 11-14 11-13 11-11 11-8 10-7 10-4M1129 948l9-7 9-9 9-10 9-13 10-13 9-14 10-15 10-16 10-15 10-14 9-14 9-13 10-11 8-9 9-7 8-6 7-3M1389 761l8-10 8-11 8-13 9-13 9-14 9-13 8-13 9-13 8-11 8-10 7-8 7-7 6-4 6-3M683 1181l15 0M767 1186l12-1 13-3 12-4 12-6 12-8 11-10 12-11 11-14 11-14 12-16 11-17 11-18 11-18 12-17 11-17 11-16 11-14 11-13 11-11 11-8 10-7 11-4M1132 951l8-5 9-8 9-9 9-10 10-13 9-13 10-15 10-15 10-15 10-16 10-14 9-14 10-13 9-11 9-10 8-7 8-5 8-3M1401 757l8-10 8-12 9-12 8-13 9-14 9-14 9-13 8-12 9-12 7-10 8-8 7-7 6-4 6-3M692 1181l15 0 15 1 14 2 14 1 13 1 13 0 13-1 13-3 12-4 12-6 12-8 11-10 12-12 11-13 11-15 12-16 11-17 12-18 11-18 11-18 12-17 11-16 11-14 12-13 10-11 11-9 11-6 10-5 10-2M1134 952l9-3 9-6 9-7 9-9 9-11 9-12 10-14 10-15 10-15 10-15 10-16 10-15 10-14 9-13 9-11 9-9 9-8 8-5 7-3M1405 763l8-9 8-11 8-11 9-13 9-13 9-14 9-14 8-13 9-13 8-11 8-10 8-9 7-6 6-5 6-3M702 1182l15 0 14 1 14 2 14 1 14 1 13 0 13-1 12-3 13-4 12-7 12-8 11-10 12-11 11-14 12-15 11-16 12-18 11-17 12-19 11-17 12-18 11-16 12-15 11-13 11-11 11-8 10-7 11-4 10-2 10-1M1137 953l9-2 8-4 9-5 9-7 9-10 10-10 9-13 10-14 10-14 10-16 10-16 10-15 10-15 10-14 9-13 10-12 9-9 8-8 8-5 8-3M1410 767l7-7 8-9 8-10 8-12 9-13 9-13 9-14 9-14 9-13 9-13 8-12 8-10 7-8 7-7 7-5 5-2 6-1M712 1184l15 1 14 1 14 1 14 2 14 0 13 0 13-1 13-3 12-4 12-6 12-9 12-10 11-12 12-13 12-15 11-17 12-17 11-18 12-19 12-18 11-17 12-16 11-15 12-13 11-11 11-9 10-7 11-4 10-2 9-1M1141 953l8 0 8-2 9-4 9-5 9-8 9-9 9-11 10-12 10-14 10-15 10-16 10-15 10-16 10-15 10-15 10-13 9-11 9-10 9-7 8-6 7-3 7-1M1415 771l7-5 7-7 8-9 8-11 8-12 9-12 9-14 9-14 9-14 9-14 9-12 8-12 8-10 8-9 7-6 6-5 6-3 5 0M722 1189l15 0 14 1 15 2 14 1 13 1 13-1 13-1 13-3 12-4 12-7 12-8 12-10 12-12 12-14 11-15 12-17 12-17 11-19 12-18 12-18 12-18 11-16 12-15 11-13 11-12 11-9 11-6 10-5 10-2 10 0 10 1 9 3M1144 954l8 1 8 0 9-2 8-4 9-6 9-7 9-9 10-11 9-13 10-14 10-15 11-16 10-16 10-16 10-15 10-14 10-13 9-12 9-10 9-7 8-5 7-4 7-1 7 1M1420 775l6-3 7-6 8-7 8-9 8-11 8-12 9-13 9-13 9-14 9-14 9-14 9-13 9-12 8-10 7-9 7-6 6-5 6-3 5 0M733 1195l15 0 14 1 14 2 14 1 14 1 13 0 13-2 13-3 12-4 12-7 12-8 12-10 12-13 12-13 11-16 12-17 12-17 12-19 11-18 12-19 12-17 12-17 11-15 12-13 11-12 11-9 11-6 10-5 10-2 10-1 9 2 9 2 9 3M1131 948l8 4 8 3 8 2 8 1 9 0 8-2 9-4 8-5 9-8 10-9 9-11 10-13 10-14 10-15 10-16 11-16 10-16 10-15 10-15 10-13 9-12 9-9 9-8 8-5 7-4 7-1 7 1M1425 779l6-2 7-3 7-6 7-7 8-9 8-11 9-12 9-13 9-14 9-14 9-14 9-14 9-13 8-12 8-10 8-9 7-6 6-5 6-3 5 0 5 1M744 1204l15 0 14 1 14 1 14 1 14 1 13 0 13-2 12-3 13-4 12-7 12-8 12-11 12-12 12-14 11-16 12-16 12-18 12-19 12-18 12-19 12-18 11-16 12-16 12-13 11-11 11-10 11-6 10-5 10-2 10-1 9 2 9 2 9 3 8 4 8 3 8 3 9 3 8 1 8 0 8-2 9-4 9-6 9-7 9-10 9-11 10-13 10-14 10-15 11-16 10-16 10-16 11-16 10-14 10-14 9-11 9-10 9-8 8-5 7-4 7-1 6 1 6 2M1430 783l6 0 6-2 7-4 7-5 7-8 8-9 8-10 9-12 9-13 9-14 9-15 9-14 9-14 9-13 9-11 8-11 7-9 7-6 7-5 5-3 6-1 4 1M755 1215l15 0 14 1 15 1 13 1 14 1 13-1 13-1 12-4 13-4 12-7 12-8 12-11 12-12 12-14 12-16 11-17 12-18 12-18 12-19 12-19 12-18 12-17 12-15 11-13 12-12 11-9 10-7 11-4 10-3 9 0 9 1 9 2 9 3 8 4 9 3 8 3 8 2 8 2 8-1 8-2 9-4 8-5 9-8 10-10 9-11 10-13 10-14 10-15 11-16 10-16 11-16 10-16 10-15 10-13 10-12 9-10 8-7 8-6 8-3 6-2 7 1 6 2 5 4M1431 785l5 3 5 1 6 0 6-2 6-4 7-5 8-8 7-9 9-11 8-12 9-13 9-14 10-14 9-14 9-14 9-13 9-12 8-11 7-8 7-7 7-5 5-3 5-1 5 1M767 1229l14 0 15 0 14 1 14 1 13 0 13 0 13-2 13-3 12-5 12-7 12-8 12-11 12-12 12-15 12-15 12-17 12-18 12-19 12-19 12-18 12-18 12-17 11-16 12-13 11-12 11-9 11-7 10-5 10-2 10-1 9 1 9 2 8 3 8 4 9 3 8 3 8 2 8 1 8 0 8-2 8-4 9-6 9-8 9-9 10-12 10-12 10-15 10-15 11-16 10-16 11-16 10-16 10-15 10-13 10-12 9-10 8-8 8-5 8-4 6-1 7 0 5 3 6 3M1422 776l5 5M1432 785l4 5 5 3 5 3 5 1 6 0 6-2 6-4 7-6 8-7 8-9 8-11 9-12 8-13 10-14 9-15 9-14 9-14 9-13 9-12 8-10 8-9 7-7 6-5 6-3 5-1 4 1 4 3M779 1245l14-1 15 1 14 0 13 1 14 0 13 0 12-2 13-4 12-5 12-7 12-8 12-11 12-12 12-15 12-16 12-17 12-18 12-18 12-19 12-19 12-18 12-17 12-15 11-14 12-12 11-9 10-7 11-5 9-2 10-1 9 1 9 2 8 3 8 3 8 3 8 3 8 2 8 1 8 0 8-3 9-4 9-5 9-8 9-10 9-11 10-13 10-15 11-15 10-16 11-16 10-16 11-16 10-15 10-13 9-12 9-10 9-8 8-6 7-3 7-1 6 0 6 2 5 3 5 4 5 5 5 4 4 5 5 3 5 3 5 1 6 0 6-2 6-4 7-6 7-8 8-9 9-11 8-12 9-13 9-14 10-14 9-15 9-14 9-13 9-12 8-10 8-9 7-7 6-5 5-3 5-1 5 1 3 3M791 1262l14 0 15 0 13 1 14 0 13 0 13-1 13-2 12-3 12-5 12-7 12-9 12-11 12-13 12-14 12-16 12-17 12-18 12-19 12-19 12-18 12-18 12-17 12-16 12-14 11-11 11-10 11-7 10-5 10-3 9 0 9 0 9 2 8 3 8 3 8 3 8 3 8 2 8 1 8-1 8-2 8-4 9-6 9-8 9-10 9-11 10-13 10-15 11-15 10-16 11-16 10-17 11-15 10-15 10-14 9-11 9-10 9-8 8-6 7-4 7-1 6 0 6 2 5 3 5 4 5 5 4 4 5 4 4 4 5 2 6 2 5-1 6-2 6-4 7-6 8-7 7-10 9-11 8-12 9-13 10-14 9-14 9-15 10-14 9-13 8-12 8-10 8-9 7-7 6-5 6-3 5-1 4 1 3 2 4 4M803 1282l14-1 15 0 13 1 14 0 13 0 13-2 12-2 13-3 12-6 12-7 12-9 11-11 12-12 12-15 12-16 12-17 12-18 12-19 12-19 12-18 13-18 12-17 11-16 12-14 11-12 11-9 11-7 10-5 10-3 9-1 9 0 8 2 9 3 8 3 7 3 8 3 8 1 8 1 8-1 8-2 8-4 9-6 8-8 10-10 9-12 10-13 10-14 11-15 10-16 11-17 10-16 11-16 10-15 10-13 9-12 9-10 9-8 8-6 7-3 7-2 6 0 5 2 6 3 4 4 5 4 5 5 4 4 5 3 4 2 6 1 5 0 6-2 6-4 7-6 7-8 8-9 9-11 8-12 9-13 9-14 10-15 9-14 9-14 9-13 9-12 8-11 8-9 7-7 6-5 5-3 5-1 4 1 4 2 3 4M815 1303l15-1 14 0 13 0 14 0 13-1 12-1 13-3 12-3 12-6 12-7 12-9 11-11 12-13 12-14 12-16 12-17 12-19 12-18 12-19 13-19 12-18 12-17 11-16 12-13 11-12 11-10 11-7 10-5 9-3 10-2 8 1 9 2 8 2 8 3 8 3 7 2 8 2 8 0 7-1 8-2 9-4 8-7 9-8 9-9 10-12 10-13 10-14 10-16 11-16 10-16 11-16 10-16 11-15 9-13 10-12 9-10 8-8 8-6 7-4 7-2 6 0 6 2 5 3 5 4 4 4 5 4 4 4 4 3 5 3 5 1 6-1 5-2 7-4 7-6 7-8 8-9 8-11 9-12 9-14 9-14 9-14 10-14 9-14 9-14 9-12 8-10 7-9 7-7 6-5 6-3 5-1 4 0 3 3 3 3 3 4M828 1325l14-2 14 0 13 0 13-1 13 0 13-2 12-3 12-4 12-5 12-8 12-9 12-11 11-13 12-14 12-16 12-17 12-18 12-19 12-19 13-19 12-18 12-17 11-15 12-14 11-12 11-10 10-7 10-6 10-3 9-1 9 0 8 2 8 2 8 3 8 2 7 3 8 1 7 0 8-1 8-2 8-5 9-6 9-8 9-10 9-11 10-13 10-15 11-15 10-16 11-17 10-16 11-16 10-14 10-14 9-12 9-10 9-8 8-6 7-4 6-2 6 0 6 2 5 3 4 3 5 4 4 5 5 3 4 3 5 3 5 0 5 0 6-3 6-4 7-6 7-7 8-10 8-11 9-12 9-13 9-14 10-15 9-14 9-14 9-13 9-12 8-11 7-9 7-7 7-5 5-3 5-1 4 0 3 3 3 3M840 1347l14-2 14-1 13 0 13-1 13-1 12-1 12-3 12-4 12-6 12-8 12-9 12-11 11-13 12-14 12-16 12-18 12-18 12-18 12-19 13-19 12-18 12-17 11-16 12-14 11-12 11-9 10-8 10-5 10-4 9-1 8 0 8 1 8 2 8 3 8 2 7 2 8 2 7 0 8-1 8-3 8-5 8-6 9-8 9-10 10-12 10-13 10-14 10-15 11-16 10-17 11-16 10-16 10-15 10-13 10-12 9-10 8-8 8-6 7-4 6-2 6 0 6 1 5 3 4 3 5 4 4 4 4 4 5 3 4 2 5 1 5-1 6-3 6-4 7-6 7-8 8-9 8-11 9-12 9-13 9-14 10-15 9-14 9-14 9-13 9-12 8-11 8-9 6-7 7-5 5-3 5-2 4 1 3 2 3 3 3 4M1686 718l3 3M853 1369l13-2 14-1 13-1 13-1 12-1 13-2 12-3 12-4 12-6 11-8 12-9 12-11 11-13 12-15 12-16 12-17 12-18 12-19 12-19 12-18 13-18 11-17 12-16 12-14 11-12 11-10 10-8 10-5 9-4 9-1 9 0 8 1 8 2 7 2 8 2 7 2 7 1 8 0 7-1 8-3 8-4 9-7 8-8 10-10 9-12 10-13 10-14 10-15 11-17 10-16 11-16 10-16 11-15 10-13 9-12 9-10 8-9 8-6 7-4 6-2 6 0 6 1 5 3 4 3 4 4 5 4 4 3 4 3 5 2 4 1 6-1 5-3 7-4 6-6 8-8 7-9 9-11 8-12 9-14 10-14 9-14 9-14 9-14 9-13 9-13 8-10 8-9 7-7 6-6 5-3 5-1 4 0 3 2 3 3 3 4M865 1390l14-2 13-1 13-1 13-1 12-1 12-3 12-3 12-4 12-7 11-7 12-10 12-11 11-13 12-15 12-16 12-17 12-18 12-19 12-18 12-19 13-18 11-17 12-16 12-14 11-12 10-10 11-8 10-5 9-4 9-2 8 0 8 1 8 2 7 2 8 2 7 2 7 0 8 0 7-1 8-3 8-5 8-6 9-8 9-10 9-12 10-13 10-15 11-15 10-16 11-16 10-17 11-15 10-15 10-14 9-12 9-10 9-8 7-6 7-4 7-3 5 0 6 1 5 3 4 3 4 3 4 4 4 4 5 2 4 2 5 1 5-1 6-3 6-4 7-7 7-7 8-10 8-11 9-12 9-13 9-14 9-15 10-14 9-14 9-13 8-12 8-11 8-9 7-7 6-5 5-4 5-1 4 0 3 2 3 3 2 4M877 1411l14-2 13-2 13-1 13-1 12-2 12-2 12-4 11-4 12-7 12-8 11-9 12-12 11-13 12-14 12-16 12-17 12-19 12-18 12-19 13-19 12-18 12-17 11-16 12-14 11-12 11-10 10-8 9-5 10-4 8-2 9-1 8 1 7 2 8 2 7 2 7 1 7 1 7 0 8-2 8-3 8-5 8-6 9-9 9-10 9-11 10-14 10-14 10-15 11-16 11-17 10-16 11-16 10-14 10-14 9-12 9-10 8-9 8-6 7-4 6-2 6-1 5 1 5 2 4 4 4 3 4 4 4 3 5 3 4 1 5 1 5-2 5-2 7-5 6-6 7-8 8-9 8-11 9-12 9-14 9-14 10-14 9-14 9-14 9-13 9-13 8-10 7-9 7-8 6-5 6-3 4-2 4 1 3 1 3 3M1703 745l2 5 2 4 2 4M890 1431l13-3 13-1 13-2 12-1 13-2 12-3 11-3 12-5 11-7 12-8 11-10 12-11 12-13 11-15 12-16 12-17 12-18 12-19 13-19 12-18 12-19 12-17 12-15 11-15 11-12 11-10 10-8 10-6 9-4 8-2 9 0 7 0 8 2 7 1 7 2 7 2 8 0 7 0 7-2 8-3 8-5 8-7 9-8 9-10 9-12 10-13 10-14 10-16 11-16 11-16 10-16 11-16 10-15 10-14 9-12 9-10 8-8 8-7 7-4 6-2 6-1 5 1 4 2 5 3 4 4 4 3 4 3 4 3 4 1 5 1 5-2 5-2 6-5 7-6 7-8 8-9 8-11 9-13 9-13 9-14 10-14 9-15 9-14 9-13 9-12 8-11 7-9 7-7 6-5 5-4 5-1 4 0 3 1 3 3 2 4 2 4 2 5 2 4 2 3 3 3"/><path d="M460.7 103V345M525.2 386.3L598 428.7M684.3 479.7L701 489.5M548 302.2L575.2 288.5" stroke="#424042" stroke-width="3"/></svg>
<canvas id="cv" class="a" width="914" height="782" style="left:0;top:0"></canvas>
<script>
(function(){
var c=document.getElementById('cv'),g=c.getContext&&c.getContext('2d');if(!g)return;
var P=[10.117196312806069,29.073615673216203,-9.111901315307303,460.04172925705143,4.480165158128467,-4.302608932157517,-29.865297356528313,347.4941964443379,-0.01974489518954787,0.018392310523986655,-0.020585205878495907,1.0];
var X0=-10.084909274336892,X1=10.242965072498146,Y0=-9.9931304690887,Y1=10.111117724279081;
var N=100,M=N+1,SX=new Float64Array(M*M),SY=new Float64Array(M*M),DP=new Float64Array(M*M);
for(var i=0;i<M;i++){for(var j=0;j<M;j++){
 var x=X0+(X1-X0)*i/N,y=Y0+(Y1-Y0)*j/N,z=Math.sin(x)+Math.sin(y),n=i*M+j;
 var w=P[8]*x+P[9]*y+P[10]*z+P[11];
 SX[n]=(P[0]*x+P[1]*y+P[2]*z+P[3])/w;SY[n]=(P[4]*x+P[5]*y+P[6]*z+P[7])/w;DP[n]=w*30.4;}}
var Q=[];
for(var i=0;i<N;i++)for(var j=0;j<N;j++){var n=i*M+j;Q.push([DP[n]+DP[n+1]+DP[n+M]+DP[n+M+1],n]);}
Q.sort(function(a,b){return b[0]-a[0];});
g.strokeStyle='#000';g.lineWidth=0.58;g.lineJoin='miter';
for(var q=0;q<Q.length;q++){var n=Q[q][1],dq=Q[q][0]/4,gv=Math.round(Math.max(120,Math.min(255,255-7.5*(dq-31))));
 g.fillStyle='rgb(0,'+gv+',0)';
 g.beginPath();g.moveTo(SX[n],SY[n]);g.lineTo(SX[n+M],SY[n+M]);g.lineTo(SX[n+M+1],SY[n+M+1]);g.lineTo(SX[n+1],SY[n+1]);g.closePath();
 g.fill();g.stroke();}
g.strokeStyle='#424042';g.lineCap='butt';
function L(a,b,c2,d,w){g.lineWidth=w;g.beginPath();g.moveTo(a,b);g.lineTo(c2,d);g.stroke();}
L(460.7,103,460.7,345,3.5);
L(525.2,386.3,598,428.7,3);
L(684.3,479.7,701,489.5,3);
L(548,302.2,575.2,288.5,3);
var fb=document.getElementById('fb');if(fb)fb.parentNode.removeChild(fb);
})();
</script>

</body></html>
